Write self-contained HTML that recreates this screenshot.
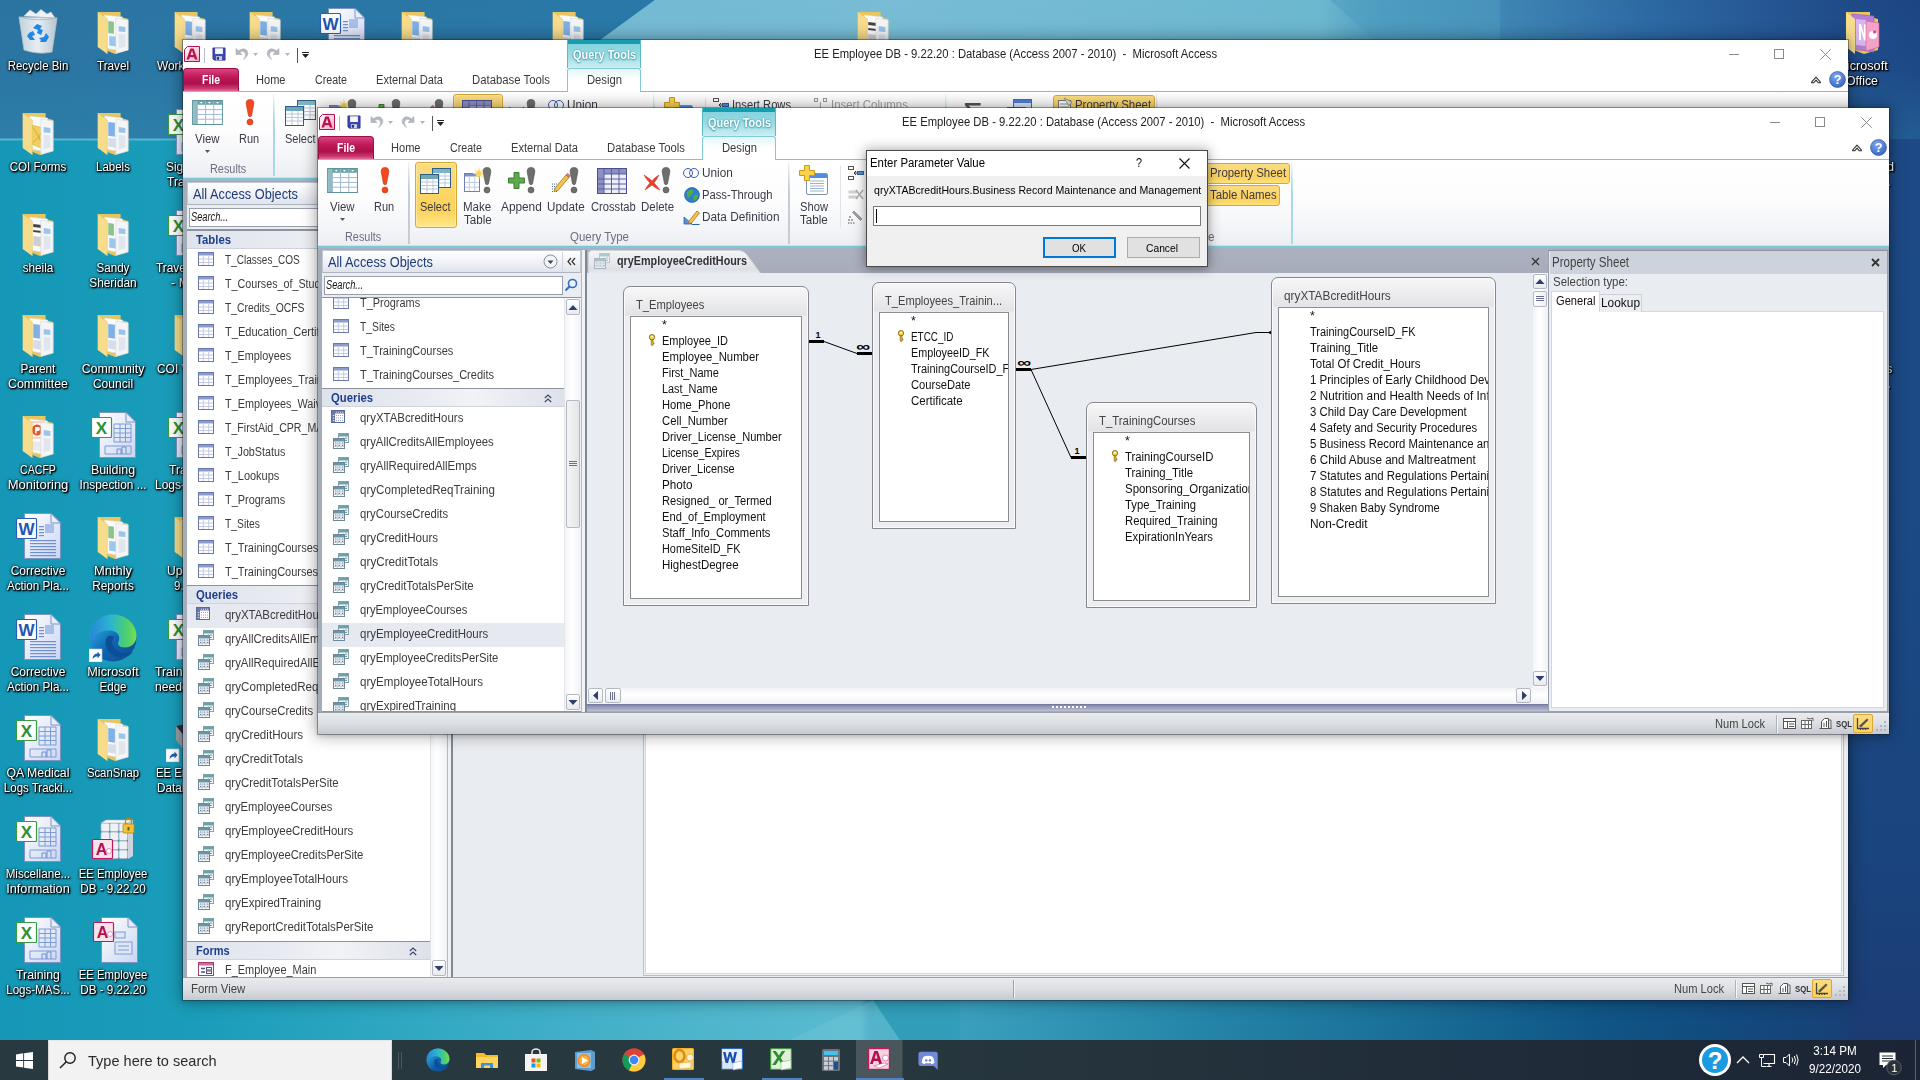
<!DOCTYPE html>
<html lang="en"><head><meta charset="utf-8"><title>Desktop - Microsoft Access</title>
<style>
html,body{margin:0;padding:0;background:#1b8fb0;}
body{width:1920px;height:1080px;overflow:hidden;position:relative;font-family:"Liberation Sans",sans-serif;font-size:12px;line-height:16px;}
#root{position:absolute;left:0;top:0;width:1920px;height:1080px;overflow:hidden;}
#root div,#root svg{position:absolute;box-sizing:border-box;}
.t{white-space:pre;transform-origin:0 0;line-height:16px;}
.t.c{text-align:center;transform-origin:50% 0;}
.clip{overflow:hidden;}
.dl{color:#fff;text-shadow:1px 1px 2px #000,0 0 3px rgba(0,0,0,.95),1px 1px 1px rgba(0,0,0,.9),0 1px 3px rgba(0,0,0,.7);text-align:center;white-space:nowrap;line-height:15px;font-size:12px;transform-origin:50% 0;}
</style></head>
<body><div id="root">
<div id="wall" style="left:0;top:0;width:1920px;height:1040px;background:linear-gradient(to right,#1598b7 0,#1a9dba 200px,#3aacc5 500px,#4db5cc 700px,#5bbbd0 860px,#349fbc 870px,#3a9fbd 960px,#2585a8 1200px,#1a6f98 1400px,#0f5585 1600px,#13487c 1750px,#1c3b72 1920px);"></div><div style="left:0;top:0;width:1920px;height:139px;background:linear-gradient(rgba(50,150,185,0) 0,rgba(50,150,185,.05) 50%,rgba(50,150,185,.28) 100%),linear-gradient(to right,#2b74a2 0,#2a78a7 560px,#2f80ad 600px,#74bad3 655px,#78bcd5 900px,#6cb8cf 1320px,#4f9cc0 1380px,#3f86b4 1500px,#2c68a3 1650px,#1f4a88 1850px,#1c4584 1920px);"></div><div style="left:0;top:138px;width:700px;height:3px;background:linear-gradient(rgba(120,200,225,.2),rgba(120,205,228,.6),rgba(120,200,225,.1));"></div><svg style="left:0;top:0" width="1920" height="1040" viewBox="0 0 1920 1040"><path d="M560 139 L600 40 L655 0 H560 Z" fill="#2a78a7"/><path d="M600 40 L655 0 H700 V40 Z" fill="#74bad3"/><path d="M1330 0 L1375 40 L1420 139 H1500 V0 Z" fill="#4f9cc0" opacity=".55"/><path d="M790 1040 L873 1000 L900 1040 Z" fill="#6cc3d6" opacity=".55"/><path d="M873 1000 L960 1000 L960 1040 L900 1040 Z" fill="#2f9cb8" opacity=".6"/></svg><div style="left:1840px;top:139px;width:80px;height:901px;background:linear-gradient(#1d4a86,#1b4a84 40%,#1a447e 80%,#1c3b72);-webkit-mask-image:linear-gradient(to right,transparent,#000 14px);mask-image:linear-gradient(to right,transparent,#000 14px);"></div><svg style="left:14px;top:8px;" width="48" height="48" viewBox="0 0 48 48"><defs><linearGradient id="rbg" x1="0" y1="0" x2="1" y2="0"><stop offset="0" stop-color="#cfd8df"/><stop offset=".5" stop-color="#f4f7f9"/><stop offset="1" stop-color="#c3ccd4"/></linearGradient></defs><path d="M10 8 L16 2 L22 6 L27 1.500 L33 6 L37 4 L41 10 Z" fill="#eef1f4" stroke="#c7ced5" stroke-width=".6"/><path d="M5 9 L43 10 L38 44 Q24 47 10 42 Z" fill="url(#rbg)" stroke="#b6c0c9" stroke-width=".8" fill-opacity=".93"/><path d="M5 9 Q24 14 43 10" fill="none" stroke="#aab5bf" stroke-width=".8"/><path d="M19 20 l4 -4 l5 2 l-2 3 l3 1 l-2 5 l-4 -2 l1 -3 z M15 25 l4 -2 l2 4 l-3 1 l3 4 h-5 l-3 -4 z M25 30 l5 -1 l2 -4 l3 4 l-3 5 h-6 l1 -2 z" fill="#1e88e5"/></svg>
<div class="dl" style="left:-22px;top:59px;width:120px;transform:scaleX(0.9559);">Recycle Bin</div>
<svg style="left:14px;top:107.5px;" width="48" height="48" viewBox="0 0 48 48"><g transform="translate(1.2,0) scale(.95,1)"><path d="M8 5 H32 V10 L40 12 V43 L26 47 L8 40 Z" fill="#e9c55d"/><path d="M15 8 L34 10 V44 L15 41 Z" fill="#fbfbfb" stroke="#d9d9d9" stroke-width=".6"/><path d="M17 17 l13 3 v21 l-13 -5 z" fill="#f2cf58" stroke="#d8ac30" stroke-width=".6"/><path d="M17 17 l8 12 l5 -9 M25 29 l-8 7 M25 29 l5 12" fill="none" stroke="#c89a20" stroke-width=".7"/><path d="M27 11 L40 13 V43 L27 46.500 Z" fill="#f4f5f7" stroke="#d4d6da" stroke-width=".6"/><path d="M30 19 l7 1 v5 l-7 -.5 z" fill="#9cc3e8"/><path d="M30 27 l7 .6 v12 l-7 1.600 z" fill="#dfe6ee"/><path d="M8 5 L18 12 V47 L8 40 Z" fill="#f7dd8b"/><path d="M8 5 L18 12 V47" fill="none" stroke="#e4c462" stroke-width=".6"/></g></svg>
<div class="dl" style="left:-22px;top:160px;width:120px;transform:scaleX(0.9644);">COI Forms</div>
<svg style="left:14px;top:208.5px;" width="48" height="48" viewBox="0 0 48 48"><g transform="translate(1.2,0) scale(.95,1)"><path d="M8 5 H32 V10 L40 12 V43 L26 47 L8 40 Z" fill="#e9c55d"/><path d="M15 8 L34 10 V44 L15 41 Z" fill="#fbfbfb" stroke="#d9d9d9" stroke-width=".6"/><path d="M19 15 l9 1 v3 l-9 -1 z M19 21 l9 1 v2 l-9 -1 z" fill="#444"/><path d="M19 27 l9 1 v10 l-9 -1.500 z" fill="#cfcfcf"/><path d="M27 11 L40 13 V43 L27 46.500 Z" fill="#f4f5f7" stroke="#d4d6da" stroke-width=".6"/><path d="M30 19 l7 1 v5 l-7 -.5 z" fill="#9cc3e8"/><path d="M30 27 l7 .6 v12 l-7 1.600 z" fill="#dfe6ee"/><path d="M8 5 L18 12 V47 L8 40 Z" fill="#f7dd8b"/><path d="M8 5 L18 12 V47" fill="none" stroke="#e4c462" stroke-width=".6"/></g></svg>
<div class="dl" style="left:-22px;top:261px;width:120px;transform:scaleX(0.9785);">sheila</div>
<svg style="left:14px;top:309.5px;" width="48" height="48" viewBox="0 0 48 48"><g transform="translate(1.2,0) scale(.95,1)"><path d="M8 5 H32 V10 L40 12 V43 L26 47 L8 40 Z" fill="#e9c55d"/><path d="M15 8 L34 10 V44 L15 41 Z" fill="#fbfbfb" stroke="#d9d9d9" stroke-width=".6"/><path d="M19 14 l7 .8 v14 l-7 -1 z" fill="#7fb0e6"/><path d="M19 30 l8 .8 v9 l-8 -1.200 z" fill="#d6dde8"/><path d="M27 11 L40 13 V43 L27 46.500 Z" fill="#f4f5f7" stroke="#d4d6da" stroke-width=".6"/><path d="M30 19 l7 1 v5 l-7 -.5 z" fill="#9cc3e8"/><path d="M30 27 l7 .6 v12 l-7 1.600 z" fill="#dfe6ee"/><path d="M8 5 L18 12 V47 L8 40 Z" fill="#f7dd8b"/><path d="M8 5 L18 12 V47" fill="none" stroke="#e4c462" stroke-width=".6"/></g></svg>
<div class="dl" style="left:-22px;top:362px;width:120px;transform:scaleX(0.9853);">Parent</div><div class="dl" style="left:-22px;top:377px;width:120px;transform:scaleX(1.033);">Committee</div>
<svg style="left:14px;top:410.5px;" width="48" height="48" viewBox="0 0 48 48"><g transform="translate(1.2,0) scale(.95,1)"><path d="M8 5 H32 V10 L40 12 V43 L26 47 L8 40 Z" fill="#e9c55d"/><path d="M15 8 L34 10 V44 L15 41 Z" fill="#fbfbfb" stroke="#d9d9d9" stroke-width=".6"/><rect x="16" y="11" width="15" height="16" fill="#fdf3ee" stroke="#e08a6a" stroke-width=".6"/><circle cx="23" cy="19" r="5.500" fill="#e2572b"/><path d="M21 16 h3 a2 2 0 0 1 0 4 h-1.500 v2.500 h-1.500 z" fill="#fff"/><path d="M17 30 l10 1 v9 l-10 -1.500 z" fill="#e7eaee"/><path d="M27 11 L40 13 V43 L27 46.500 Z" fill="#f4f5f7" stroke="#d4d6da" stroke-width=".6"/><path d="M30 19 l7 1 v5 l-7 -.5 z" fill="#9cc3e8"/><path d="M30 27 l7 .6 v12 l-7 1.600 z" fill="#dfe6ee"/><path d="M8 5 L18 12 V47 L8 40 Z" fill="#f7dd8b"/><path d="M8 5 L18 12 V47" fill="none" stroke="#e4c462" stroke-width=".6"/></g></svg>
<div class="dl" style="left:-22px;top:463px;width:120px;transform:scaleX(0.8821);">CACFP</div><div class="dl" style="left:-22px;top:478px;width:120px;transform:scaleX(1.0837);">Monitoring</div>
<svg style="left:15px;top:512px;" width="48" height="48" viewBox="0 0 48 48"><defs><linearGradient id="dgW" x1="0" y1="0" x2="1" y2="1"><stop offset="0" stop-color="#fff"/><stop offset="1" stop-color="#c9d6f2"/></linearGradient></defs><path d="M9.500 1.500 H36 L45.500 11 V46.500 H9.500 Z" fill="url(#dgW)" stroke="#7d93c4" stroke-width="1"/><path d="M36 1.500 V11 H45.500 Z" fill="#e9effa" stroke="#7d93c4" stroke-width="1"/><rect x="30" y="12" width="9" height="9" fill="#a9bfe8"/><rect x="24" y="14" width="5" height="1.200" fill="#6f8fd0"/><rect x="24" y="17" width="5" height="1.200" fill="#6f8fd0"/><rect x="24" y="20" width="5" height="1.200" fill="#6f8fd0"/><rect x="24" y="23" width="5" height="1.200" fill="#6f8fd0"/><rect x="15" y="28" width="26" height="1.200" fill="#6f8fd0"/><rect x="15" y="31" width="26" height="1.200" fill="#6f8fd0"/><rect x="15" y="34" width="26" height="1.200" fill="#6f8fd0"/><rect x="15" y="37" width="26" height="1.200" fill="#6f8fd0"/><rect x="15" y="40" width="26" height="1.200" fill="#6f8fd0"/><rect x="15" y="43" width="26" height="1.200" fill="#6f8fd0"/><rect x="1.500" y="6.500" width="20" height="20" rx="1" fill="#fff" stroke="#2a5db8" stroke-width="1.200"/><text x="11.500" y="22.500" font-family="Liberation Sans,sans-serif" font-weight="bold" font-size="17" fill="#1f55b3" text-anchor="middle">W</text></svg>
<div class="dl" style="left:-22px;top:564px;width:120px;transform:scaleX(1.0005);">Corrective</div><div class="dl" style="left:-22px;top:579px;width:120px;transform:scaleX(0.9706);">Action Pla...</div>
<svg style="left:15px;top:613px;" width="48" height="48" viewBox="0 0 48 48"><defs><linearGradient id="dgW" x1="0" y1="0" x2="1" y2="1"><stop offset="0" stop-color="#fff"/><stop offset="1" stop-color="#c9d6f2"/></linearGradient></defs><path d="M9.500 1.500 H36 L45.500 11 V46.500 H9.500 Z" fill="url(#dgW)" stroke="#7d93c4" stroke-width="1"/><path d="M36 1.500 V11 H45.500 Z" fill="#e9effa" stroke="#7d93c4" stroke-width="1"/><rect x="30" y="12" width="9" height="9" fill="#a9bfe8"/><rect x="24" y="14" width="5" height="1.200" fill="#6f8fd0"/><rect x="24" y="17" width="5" height="1.200" fill="#6f8fd0"/><rect x="24" y="20" width="5" height="1.200" fill="#6f8fd0"/><rect x="24" y="23" width="5" height="1.200" fill="#6f8fd0"/><rect x="15" y="28" width="26" height="1.200" fill="#6f8fd0"/><rect x="15" y="31" width="26" height="1.200" fill="#6f8fd0"/><rect x="15" y="34" width="26" height="1.200" fill="#6f8fd0"/><rect x="15" y="37" width="26" height="1.200" fill="#6f8fd0"/><rect x="15" y="40" width="26" height="1.200" fill="#6f8fd0"/><rect x="15" y="43" width="26" height="1.200" fill="#6f8fd0"/><rect x="1.500" y="6.500" width="20" height="20" rx="1" fill="#fff" stroke="#2a5db8" stroke-width="1.200"/><text x="11.500" y="22.500" font-family="Liberation Sans,sans-serif" font-weight="bold" font-size="17" fill="#1f55b3" text-anchor="middle">W</text></svg>
<div class="dl" style="left:-22px;top:665px;width:120px;transform:scaleX(1.0005);">Corrective</div><div class="dl" style="left:-22px;top:680px;width:120px;transform:scaleX(0.9706);">Action Pla...</div>
<svg style="left:15px;top:714px;" width="48" height="48" viewBox="0 0 48 48"><defs><linearGradient id="dgX" x1="0" y1="0" x2="1" y2="1"><stop offset="0" stop-color="#fff"/><stop offset="1" stop-color="#c9d6f2"/></linearGradient></defs><path d="M9.500 1.500 H36 L45.500 11 V46.500 H9.500 Z" fill="url(#dgX)" stroke="#7d93c4" stroke-width="1"/><path d="M36 1.500 V11 H45.500 Z" fill="#e9effa" stroke="#7d93c4" stroke-width="1"/><path d="M24 13 H41 V31 H24 Z M24 17.500 H41 M24 22 H41 M24 26.500 H41 M30 13 V31 M35.500 13 V31" fill="none" stroke="#7f9bd4" stroke-width="1"/><path d="M15 35 H41 V43 H15 Z" fill="none" stroke="#7f9bd4" stroke-width="1"/><path d="M27 43 V38 H31 V43 M32 43 V36 H36 V43" fill="none" stroke="#6f8fd0" stroke-width="1"/><rect x="1.500" y="6.500" width="20" height="20" rx="1" fill="#fff" stroke="#3a9a3e" stroke-width="1.200"/><text x="11.500" y="22.500" font-family="Liberation Sans,sans-serif" font-weight="bold" font-size="17" fill="#2f8f33" text-anchor="middle">X</text></svg>
<div class="dl" style="left:-22px;top:766px;width:120px;transform:scaleX(1.0248);">QA Medical</div><div class="dl" style="left:-22px;top:781px;width:120px;transform:scaleX(0.9565);">Logs Tracki...</div>
<svg style="left:15px;top:815px;" width="48" height="48" viewBox="0 0 48 48"><defs><linearGradient id="dgX" x1="0" y1="0" x2="1" y2="1"><stop offset="0" stop-color="#fff"/><stop offset="1" stop-color="#c9d6f2"/></linearGradient></defs><path d="M9.500 1.500 H36 L45.500 11 V46.500 H9.500 Z" fill="url(#dgX)" stroke="#7d93c4" stroke-width="1"/><path d="M36 1.500 V11 H45.500 Z" fill="#e9effa" stroke="#7d93c4" stroke-width="1"/><path d="M24 13 H41 V31 H24 Z M24 17.500 H41 M24 22 H41 M24 26.500 H41 M30 13 V31 M35.500 13 V31" fill="none" stroke="#7f9bd4" stroke-width="1"/><path d="M15 35 H41 V43 H15 Z" fill="none" stroke="#7f9bd4" stroke-width="1"/><path d="M27 43 V38 H31 V43 M32 43 V36 H36 V43" fill="none" stroke="#6f8fd0" stroke-width="1"/><rect x="1.500" y="6.500" width="20" height="20" rx="1" fill="#fff" stroke="#3a9a3e" stroke-width="1.200"/><text x="11.500" y="22.500" font-family="Liberation Sans,sans-serif" font-weight="bold" font-size="17" fill="#2f8f33" text-anchor="middle">X</text></svg>
<div class="dl" style="left:-22px;top:867px;width:120px;transform:scaleX(0.9696);">Miscellane...</div><div class="dl" style="left:-22px;top:882px;width:120px;transform:scaleX(1.0571);">Information</div>
<svg style="left:15px;top:916px;" width="48" height="48" viewBox="0 0 48 48"><defs><linearGradient id="dgX" x1="0" y1="0" x2="1" y2="1"><stop offset="0" stop-color="#fff"/><stop offset="1" stop-color="#c9d6f2"/></linearGradient></defs><path d="M9.500 1.500 H36 L45.500 11 V46.500 H9.500 Z" fill="url(#dgX)" stroke="#7d93c4" stroke-width="1"/><path d="M36 1.500 V11 H45.500 Z" fill="#e9effa" stroke="#7d93c4" stroke-width="1"/><path d="M24 13 H41 V31 H24 Z M24 17.500 H41 M24 22 H41 M24 26.500 H41 M30 13 V31 M35.500 13 V31" fill="none" stroke="#7f9bd4" stroke-width="1"/><path d="M15 35 H41 V43 H15 Z" fill="none" stroke="#7f9bd4" stroke-width="1"/><path d="M27 43 V38 H31 V43 M32 43 V36 H36 V43" fill="none" stroke="#6f8fd0" stroke-width="1"/><rect x="1.500" y="6.500" width="20" height="20" rx="1" fill="#fff" stroke="#3a9a3e" stroke-width="1.200"/><text x="11.500" y="22.500" font-family="Liberation Sans,sans-serif" font-weight="bold" font-size="17" fill="#2f8f33" text-anchor="middle">X</text></svg>
<div class="dl" style="left:-22px;top:968px;width:120px;transform:scaleX(1.0223);">Training</div><div class="dl" style="left:-22px;top:983px;width:120px;transform:scaleX(0.963);">Logs-MAS...</div>
<svg style="left:89px;top:6.5px;" width="48" height="48" viewBox="0 0 48 48"><g transform="translate(1.2,0) scale(.95,1)"><path d="M8 5 H32 V10 L40 12 V43 L26 47 L8 40 Z" fill="#e9c55d"/><path d="M15 8 L34 10 V44 L15 41 Z" fill="#fbfbfb" stroke="#d9d9d9" stroke-width=".6"/><path d="M19 14 l6 .7 v12 l-6 -.6 z" fill="#8cc38a"/><path d="M20 29 l8 .8 v10 l-8 -1.200 z" fill="#9dc7ea"/><path d="M27 11 L40 13 V43 L27 46.500 Z" fill="#f4f5f7" stroke="#d4d6da" stroke-width=".6"/><path d="M30 19 l7 1 v5 l-7 -.5 z" fill="#9cc3e8"/><path d="M30 27 l7 .6 v12 l-7 1.600 z" fill="#dfe6ee"/><path d="M8 5 L18 12 V47 L8 40 Z" fill="#f7dd8b"/><path d="M8 5 L18 12 V47" fill="none" stroke="#e4c462" stroke-width=".6"/></g></svg>
<div class="dl" style="left:53px;top:59px;width:120px;transform:scaleX(0.9766);">Travel</div>
<svg style="left:89px;top:107.5px;" width="48" height="48" viewBox="0 0 48 48"><g transform="translate(1.2,0) scale(.95,1)"><path d="M8 5 H32 V10 L40 12 V43 L26 47 L8 40 Z" fill="#e9c55d"/><path d="M15 8 L34 10 V44 L15 41 Z" fill="#fbfbfb" stroke="#d9d9d9" stroke-width=".6"/><path d="M19 14 l7 .8 v14 l-7 -1 z" fill="#7fb0e6"/><path d="M19 30 l8 .8 v9 l-8 -1.200 z" fill="#d6dde8"/><path d="M27 11 L40 13 V43 L27 46.500 Z" fill="#f4f5f7" stroke="#d4d6da" stroke-width=".6"/><path d="M30 19 l7 1 v5 l-7 -.5 z" fill="#9cc3e8"/><path d="M30 27 l7 .6 v12 l-7 1.600 z" fill="#dfe6ee"/><path d="M8 5 L18 12 V47 L8 40 Z" fill="#f7dd8b"/><path d="M8 5 L18 12 V47" fill="none" stroke="#e4c462" stroke-width=".6"/></g></svg>
<div class="dl" style="left:53px;top:160px;width:120px;transform:scaleX(0.9545);">Labels</div>
<svg style="left:89px;top:208.5px;" width="48" height="48" viewBox="0 0 48 48"><g transform="translate(1.2,0) scale(.95,1)"><path d="M8 5 H32 V10 L40 12 V43 L26 47 L8 40 Z" fill="#e9c55d"/><path d="M15 8 L34 10 V44 L15 41 Z" fill="#fbfbfb" stroke="#d9d9d9" stroke-width=".6"/><path d="M19 14 l6 .7 v12 l-6 -.6 z" fill="#8cc38a"/><path d="M20 29 l8 .8 v10 l-8 -1.200 z" fill="#9dc7ea"/><path d="M27 11 L40 13 V43 L27 46.500 Z" fill="#f4f5f7" stroke="#d4d6da" stroke-width=".6"/><path d="M30 19 l7 1 v5 l-7 -.5 z" fill="#9cc3e8"/><path d="M30 27 l7 .6 v12 l-7 1.600 z" fill="#dfe6ee"/><path d="M8 5 L18 12 V47 L8 40 Z" fill="#f7dd8b"/><path d="M8 5 L18 12 V47" fill="none" stroke="#e4c462" stroke-width=".6"/></g></svg>
<div class="dl" style="left:53px;top:261px;width:120px;transform:scaleX(0.9627);">Sandy</div><div class="dl" style="left:53px;top:276px;width:120px;transform:scaleX(0.987);">Sheridan</div>
<svg style="left:89px;top:309.5px;" width="48" height="48" viewBox="0 0 48 48"><g transform="translate(1.2,0) scale(.95,1)"><path d="M8 5 H32 V10 L40 12 V43 L26 47 L8 40 Z" fill="#e9c55d"/><path d="M15 8 L34 10 V44 L15 41 Z" fill="#fbfbfb" stroke="#d9d9d9" stroke-width=".6"/><path d="M19 14 l7 .8 v14 l-7 -1 z" fill="#7fb0e6"/><path d="M19 30 l8 .8 v9 l-8 -1.200 z" fill="#d6dde8"/><path d="M27 11 L40 13 V43 L27 46.500 Z" fill="#f4f5f7" stroke="#d4d6da" stroke-width=".6"/><path d="M30 19 l7 1 v5 l-7 -.5 z" fill="#9cc3e8"/><path d="M30 27 l7 .6 v12 l-7 1.600 z" fill="#dfe6ee"/><path d="M8 5 L18 12 V47 L8 40 Z" fill="#f7dd8b"/><path d="M8 5 L18 12 V47" fill="none" stroke="#e4c462" stroke-width=".6"/></g></svg>
<div class="dl" style="left:53px;top:362px;width:120px;transform:scaleX(1.0336);">Community</div><div class="dl" style="left:53px;top:377px;width:120px;transform:scaleX(1.0039);">Council</div>
<svg style="left:90px;top:411px;" width="48" height="48" viewBox="0 0 48 48"><defs><linearGradient id="dgX" x1="0" y1="0" x2="1" y2="1"><stop offset="0" stop-color="#fff"/><stop offset="1" stop-color="#c9d6f2"/></linearGradient></defs><path d="M9.500 1.500 H36 L45.500 11 V46.500 H9.500 Z" fill="url(#dgX)" stroke="#7d93c4" stroke-width="1"/><path d="M36 1.500 V11 H45.500 Z" fill="#e9effa" stroke="#7d93c4" stroke-width="1"/><path d="M24 13 H41 V31 H24 Z M24 17.500 H41 M24 22 H41 M24 26.500 H41 M30 13 V31 M35.500 13 V31" fill="none" stroke="#7f9bd4" stroke-width="1"/><path d="M15 35 H41 V43 H15 Z" fill="none" stroke="#7f9bd4" stroke-width="1"/><path d="M27 43 V38 H31 V43 M32 43 V36 H36 V43" fill="none" stroke="#6f8fd0" stroke-width="1"/><rect x="1.500" y="6.500" width="20" height="20" rx="1" fill="#fff" stroke="#3a9a3e" stroke-width="1.200"/><text x="11.500" y="22.500" font-family="Liberation Sans,sans-serif" font-weight="bold" font-size="17" fill="#2f8f33" text-anchor="middle">X</text></svg>
<div class="dl" style="left:53px;top:463px;width:120px;transform:scaleX(1.034);">Building</div><div class="dl" style="left:53px;top:478px;width:120px;transform:scaleX(0.9876);">Inspection ...</div>
<svg style="left:89px;top:511.5px;" width="48" height="48" viewBox="0 0 48 48"><g transform="translate(1.2,0) scale(.95,1)"><path d="M8 5 H32 V10 L40 12 V43 L26 47 L8 40 Z" fill="#e9c55d"/><path d="M15 8 L34 10 V44 L15 41 Z" fill="#fbfbfb" stroke="#d9d9d9" stroke-width=".6"/><path d="M19 14 l6 .7 v12 l-6 -.6 z" fill="#8cc38a"/><path d="M20 29 l8 .8 v10 l-8 -1.200 z" fill="#9dc7ea"/><path d="M27 11 L40 13 V43 L27 46.500 Z" fill="#f4f5f7" stroke="#d4d6da" stroke-width=".6"/><path d="M30 19 l7 1 v5 l-7 -.5 z" fill="#9cc3e8"/><path d="M30 27 l7 .6 v12 l-7 1.600 z" fill="#dfe6ee"/><path d="M8 5 L18 12 V47 L8 40 Z" fill="#f7dd8b"/><path d="M8 5 L18 12 V47" fill="none" stroke="#e4c462" stroke-width=".6"/></g></svg>
<div class="dl" style="left:53px;top:564px;width:120px;transform:scaleX(1.0711);">Mnthly</div><div class="dl" style="left:53px;top:579px;width:120px;transform:scaleX(0.9925);">Reports</div>
<svg style="left:89px;top:614px;" width="48" height="48" viewBox="0 0 48 48"><defs><linearGradient id="Eg1" x1="0" y1="0" x2="1" y2="1"><stop offset="0" stop-color="#35c1f1"/><stop offset=".55" stop-color="#0f63b0"/><stop offset="1" stop-color="#114a8b"/></linearGradient><linearGradient id="Eg2" x1="0" y1="0" x2="1" y2="0"><stop offset="0" stop-color="#2a86dc"/><stop offset=".45" stop-color="#2cb5cf"/><stop offset=".8" stop-color="#4fd06a"/><stop offset="1" stop-color="#7bdc55"/></linearGradient></defs><circle cx="24" cy="24" r="23.500" fill="url(#Eg1)"/><path d="M1.500 20 C3 8 13 .5 24 .5 C37 .5 47.500 10 47.500 22 C47.500 29 42 33.500 36 33.500 C30 33.500 28.500 30.500 29.200 28.500 C31 25 31 19 24 17 C14 15 5 20 1.500 28 Z" fill="url(#Eg2)"/><path d="M18 23 C14 30 18 41 30 43.500 C36 44.500 41 41.500 44 37.500 C38 40.500 28 39.500 24.500 32.500 C22.500 29 23 25.500 25.200 23.200 C23 21.200 20 21.400 18 23 Z" fill="#0b4f96"/><rect x="0" y="35" width="13" height="13" fill="#fff" stroke="#b8c4d0" stroke-width=".6"/><path d="M3.500 45 Q4 39.500 8.500 39.500 V37.500 L11.500 41 L8.500 44.500 V42.300 Q5.500 42.300 3.500 45 Z" fill="#1a5fb4"/></svg>
<div class="dl" style="left:53px;top:665px;width:120px;transform:scaleX(1.0558);">Microsoft</div><div class="dl" style="left:53px;top:680px;width:120px;transform:scaleX(0.9634);">Edge</div>
<svg style="left:89px;top:713.5px;" width="48" height="48" viewBox="0 0 48 48"><g transform="translate(1.2,0) scale(.95,1)"><path d="M8 5 H32 V10 L40 12 V43 L26 47 L8 40 Z" fill="#e9c55d"/><path d="M15 8 L34 10 V44 L15 41 Z" fill="#fbfbfb" stroke="#d9d9d9" stroke-width=".6"/><path d="M19 14 l7 .8 v14 l-7 -1 z" fill="#7fb0e6"/><path d="M19 30 l8 .8 v9 l-8 -1.200 z" fill="#d6dde8"/><path d="M27 11 L40 13 V43 L27 46.500 Z" fill="#f4f5f7" stroke="#d4d6da" stroke-width=".6"/><path d="M30 19 l7 1 v5 l-7 -.5 z" fill="#9cc3e8"/><path d="M30 27 l7 .6 v12 l-7 1.600 z" fill="#dfe6ee"/><path d="M8 5 L18 12 V47 L8 40 Z" fill="#f7dd8b"/><path d="M8 5 L18 12 V47" fill="none" stroke="#e4c462" stroke-width=".6"/></g></svg>
<div class="dl" style="left:53px;top:766px;width:120px;transform:scaleX(0.9421);">ScanSnap</div>
<svg style="left:89px;top:814.5px;" width="48" height="48" viewBox="0 0 48 48"><rect x="12" y="8" width="8.500" height="8.500" rx="1.500" fill="#eef1f6" stroke="#aab2c0" stroke-width=".8"/><rect x="21" y="8" width="8.500" height="8.500" rx="1.500" fill="#eef1f6" stroke="#aab2c0" stroke-width=".8"/><rect x="30" y="8" width="8.500" height="8.500" rx="1.500" fill="#eef1f6" stroke="#aab2c0" stroke-width=".8"/><rect x="12" y="17" width="8.500" height="8.500" rx="1.500" fill="#eef1f6" stroke="#aab2c0" stroke-width=".8"/><rect x="21" y="17" width="8.500" height="8.500" rx="1.500" fill="#eef1f6" stroke="#aab2c0" stroke-width=".8"/><rect x="30" y="17" width="8.500" height="8.500" rx="1.500" fill="#eef1f6" stroke="#aab2c0" stroke-width=".8"/><rect x="12" y="26" width="8.500" height="8.500" rx="1.500" fill="#eef1f6" stroke="#aab2c0" stroke-width=".8"/><rect x="21" y="26" width="8.500" height="8.500" rx="1.500" fill="#eef1f6" stroke="#aab2c0" stroke-width=".8"/><rect x="30" y="26" width="8.500" height="8.500" rx="1.500" fill="#eef1f6" stroke="#aab2c0" stroke-width=".8"/><rect x="12" y="35" width="8.500" height="8.500" rx="1.500" fill="#eef1f6" stroke="#aab2c0" stroke-width=".8"/><rect x="21" y="35" width="8.500" height="8.500" rx="1.500" fill="#eef1f6" stroke="#aab2c0" stroke-width=".8"/><rect x="30" y="35" width="8.500" height="8.500" rx="1.500" fill="#eef1f6" stroke="#aab2c0" stroke-width=".8"/><path d="M39 8 l5 -3 v36 l-5 3 z" fill="#cdd3de"/><path d="M12 8 l5 -3 h27 l-5 3 z" fill="#f8f9fb" stroke="#aab2c0" stroke-width=".6"/><rect x="34" y="9" width="11" height="9" rx="1" fill="#f3c23c" stroke="#b98a12" stroke-width=".8"/><path d="M36.500 9 v-2.500 a3 3 0 0 1 6 0 v2.500" fill="none" stroke="#b98a12" stroke-width="1.300"/><rect x="38.500" y="12" width="2" height="3.500" fill="#7a5a08"/><rect x="3.500" y="24.500" width="20" height="19" rx="1" fill="#fbe3ee" stroke="#c2185b" stroke-width="1.200"/><text x="12.500" y="39.500" font-family="Liberation Sans,sans-serif" font-weight="bold" font-size="16" fill="#b0104e" text-anchor="middle">A</text><circle cx="20" cy="36" r="2.500" fill="#fff" stroke="#d05a8a" stroke-width=".6"/></svg>
<div class="dl" style="left:53px;top:867px;width:120px;transform:scaleX(0.9428);">EE Employee</div><div class="dl" style="left:53px;top:882px;width:120px;transform:scaleX(0.9726);">DB - 9.22.20</div>
<svg style="left:92px;top:916px;" width="48" height="48" viewBox="0 0 48 48"><defs><linearGradient id="dgA" x1="0" y1="0" x2="1" y2="1"><stop offset="0" stop-color="#fff"/><stop offset="1" stop-color="#c9d6f2"/></linearGradient></defs><path d="M9.500 1.500 H36 L45.500 11 V46.500 H9.500 Z" fill="url(#dgA)" stroke="#7d93c4" stroke-width="1"/><path d="M36 1.500 V11 H45.500 Z" fill="#e9effa" stroke="#7d93c4" stroke-width="1"/><rect x="23" y="16" width="10" height="6" fill="#dfe7f7" stroke="#7f9bd4"/><rect x="23" y="26" width="17" height="12" fill="#dfe7f7" stroke="#7f9bd4"/><path d="M26 30 H37 M26 34 H37" stroke="#7f9bd4"/><rect x="1.500" y="6.500" width="20" height="19" rx="1" fill="#fbe3ee" stroke="#c2185b" stroke-width="1.200"/><text x="10.500" y="21.500" font-family="Liberation Sans,sans-serif" font-weight="bold" font-size="16" fill="#b0104e" text-anchor="middle">A</text><circle cx="18" cy="18" r="2.500" fill="#fff" stroke="#d05a8a" stroke-width=".6"/></svg>
<div class="dl" style="left:53px;top:968px;width:120px;transform:scaleX(0.9428);">EE Employee</div><div class="dl" style="left:53px;top:983px;width:120px;transform:scaleX(0.9726);">DB - 9.22.20</div>
<svg style="left:166px;top:6.5px;" width="48" height="48" viewBox="0 0 48 48"><g transform="translate(1.2,0) scale(.95,1)"><path d="M8 5 H32 V10 L40 12 V43 L26 47 L8 40 Z" fill="#e9c55d"/><path d="M15 8 L34 10 V44 L15 41 Z" fill="#fbfbfb" stroke="#d9d9d9" stroke-width=".6"/><path d="M19 14 l7 .8 v14 l-7 -1 z" fill="#7fb0e6"/><path d="M19 30 l8 .8 v9 l-8 -1.200 z" fill="#d6dde8"/><path d="M27 11 L40 13 V43 L27 46.500 Z" fill="#f4f5f7" stroke="#d4d6da" stroke-width=".6"/><path d="M30 19 l7 1 v5 l-7 -.5 z" fill="#9cc3e8"/><path d="M30 27 l7 .6 v12 l-7 1.600 z" fill="#dfe6ee"/><path d="M8 5 L18 12 V47 L8 40 Z" fill="#f7dd8b"/><path d="M8 5 L18 12 V47" fill="none" stroke="#e4c462" stroke-width=".6"/></g></svg>
<div class="dl" style="left:157px;top:59px;text-align:left;transform-origin:0 0;transform:scaleX(0.9895);">Work Files</div>
<svg style="left:167px;top:108px;" width="48" height="48" viewBox="0 0 48 48"><defs><linearGradient id="dgX" x1="0" y1="0" x2="1" y2="1"><stop offset="0" stop-color="#fff"/><stop offset="1" stop-color="#c9d6f2"/></linearGradient></defs><path d="M9.500 1.500 H36 L45.500 11 V46.500 H9.500 Z" fill="url(#dgX)" stroke="#7d93c4" stroke-width="1"/><path d="M36 1.500 V11 H45.500 Z" fill="#e9effa" stroke="#7d93c4" stroke-width="1"/><path d="M24 13 H41 V31 H24 Z M24 17.500 H41 M24 22 H41 M24 26.500 H41 M30 13 V31 M35.500 13 V31" fill="none" stroke="#7f9bd4" stroke-width="1"/><path d="M15 35 H41 V43 H15 Z" fill="none" stroke="#7f9bd4" stroke-width="1"/><path d="M27 43 V38 H31 V43 M32 43 V36 H36 V43" fill="none" stroke="#6f8fd0" stroke-width="1"/><rect x="1.500" y="6.500" width="20" height="20" rx="1" fill="#fff" stroke="#3a9a3e" stroke-width="1.200"/><text x="11.500" y="22.500" font-family="Liberation Sans,sans-serif" font-weight="bold" font-size="17" fill="#2f8f33" text-anchor="middle">X</text></svg>
<div class="dl" style="left:166px;top:160px;text-align:left;transform-origin:0 0;transform:scaleX(0.994);">Sign In</div><div class="dl" style="left:167px;top:175px;text-align:left;transform-origin:0 0;transform:scaleX(1.0033);">Tracking</div>
<svg style="left:167px;top:209px;" width="48" height="48" viewBox="0 0 48 48"><defs><linearGradient id="dgX" x1="0" y1="0" x2="1" y2="1"><stop offset="0" stop-color="#fff"/><stop offset="1" stop-color="#c9d6f2"/></linearGradient></defs><path d="M9.500 1.500 H36 L45.500 11 V46.500 H9.500 Z" fill="url(#dgX)" stroke="#7d93c4" stroke-width="1"/><path d="M36 1.500 V11 H45.500 Z" fill="#e9effa" stroke="#7d93c4" stroke-width="1"/><path d="M24 13 H41 V31 H24 Z M24 17.500 H41 M24 22 H41 M24 26.500 H41 M30 13 V31 M35.500 13 V31" fill="none" stroke="#7f9bd4" stroke-width="1"/><path d="M15 35 H41 V43 H15 Z" fill="none" stroke="#7f9bd4" stroke-width="1"/><path d="M27 43 V38 H31 V43 M32 43 V36 H36 V43" fill="none" stroke="#6f8fd0" stroke-width="1"/><rect x="1.500" y="6.500" width="20" height="20" rx="1" fill="#fff" stroke="#3a9a3e" stroke-width="1.200"/><text x="11.500" y="22.500" font-family="Liberation Sans,sans-serif" font-weight="bold" font-size="17" fill="#2f8f33" text-anchor="middle">X</text></svg>
<div class="dl" style="left:156px;top:261px;text-align:left;transform-origin:0 0;transform:scaleX(0.9888);">Travel Log</div><div class="dl" style="left:171px;top:276px;text-align:left;transform-origin:0 0;transform:scaleX(1.0414);">- Mileage</div>
<svg style="left:166px;top:309.5px;" width="48" height="48" viewBox="0 0 48 48"><g transform="translate(1.2,0) scale(.95,1)"><path d="M8 5 H32 V10 L40 12 V43 L26 47 L8 40 Z" fill="#e9c55d"/><path d="M15 8 L34 10 V44 L15 41 Z" fill="#fbfbfb" stroke="#d9d9d9" stroke-width=".6"/><path d="M19 14 l7 .8 v14 l-7 -1 z" fill="#7fb0e6"/><path d="M19 30 l8 .8 v9 l-8 -1.200 z" fill="#d6dde8"/><path d="M27 11 L40 13 V43 L27 46.500 Z" fill="#f4f5f7" stroke="#d4d6da" stroke-width=".6"/><path d="M30 19 l7 1 v5 l-7 -.5 z" fill="#9cc3e8"/><path d="M30 27 l7 .6 v12 l-7 1.600 z" fill="#dfe6ee"/><path d="M8 5 L18 12 V47 L8 40 Z" fill="#f7dd8b"/><path d="M8 5 L18 12 V47" fill="none" stroke="#e4c462" stroke-width=".6"/></g></svg>
<div class="dl" style="left:157px;top:362px;text-align:left;transform-origin:0 0;transform:scaleX(0.9931);">COI Vendors</div>
<svg style="left:167px;top:411px;" width="48" height="48" viewBox="0 0 48 48"><defs><linearGradient id="dgX" x1="0" y1="0" x2="1" y2="1"><stop offset="0" stop-color="#fff"/><stop offset="1" stop-color="#c9d6f2"/></linearGradient></defs><path d="M9.500 1.500 H36 L45.500 11 V46.500 H9.500 Z" fill="url(#dgX)" stroke="#7d93c4" stroke-width="1"/><path d="M36 1.500 V11 H45.500 Z" fill="#e9effa" stroke="#7d93c4" stroke-width="1"/><path d="M24 13 H41 V31 H24 Z M24 17.500 H41 M24 22 H41 M24 26.500 H41 M30 13 V31 M35.500 13 V31" fill="none" stroke="#7f9bd4" stroke-width="1"/><path d="M15 35 H41 V43 H15 Z" fill="none" stroke="#7f9bd4" stroke-width="1"/><path d="M27 43 V38 H31 V43 M32 43 V36 H36 V43" fill="none" stroke="#6f8fd0" stroke-width="1"/><rect x="1.500" y="6.500" width="20" height="20" rx="1" fill="#fff" stroke="#3a9a3e" stroke-width="1.200"/><text x="11.500" y="22.500" font-family="Liberation Sans,sans-serif" font-weight="bold" font-size="17" fill="#2f8f33" text-anchor="middle">X</text></svg>
<div class="dl" style="left:169px;top:463px;text-align:left;transform-origin:0 0;transform:scaleX(1.0223);">Training</div><div class="dl" style="left:155px;top:478px;text-align:left;transform-origin:0 0;transform:scaleX(0.9984);">Logs-2020</div>
<svg style="left:166px;top:511.5px;" width="48" height="48" viewBox="0 0 48 48"><g transform="translate(1.2,0) scale(.95,1)"><path d="M8 5 H32 V10 L40 12 V43 L26 47 L8 40 Z" fill="#e9c55d"/><path d="M15 8 L34 10 V44 L15 41 Z" fill="#fbfbfb" stroke="#d9d9d9" stroke-width=".6"/><path d="M19 14 l6 .7 v12 l-6 -.6 z" fill="#8cc38a"/><path d="M20 29 l8 .8 v10 l-8 -1.200 z" fill="#9dc7ea"/><path d="M27 11 L40 13 V43 L27 46.500 Z" fill="#f4f5f7" stroke="#d4d6da" stroke-width=".6"/><path d="M30 19 l7 1 v5 l-7 -.5 z" fill="#9cc3e8"/><path d="M30 27 l7 .6 v12 l-7 1.600 z" fill="#dfe6ee"/><path d="M8 5 L18 12 V47 L8 40 Z" fill="#f7dd8b"/><path d="M8 5 L18 12 V47" fill="none" stroke="#e4c462" stroke-width=".6"/></g></svg>
<div class="dl" style="left:167px;top:564px;text-align:left;transform-origin:0 0;transform:scaleX(1.002);">Updates</div><div class="dl" style="left:174px;top:579px;text-align:left;transform-origin:0 0;transform:scaleX(0.9616);">9.20</div>
<svg style="left:167px;top:613px;" width="48" height="48" viewBox="0 0 48 48"><defs><linearGradient id="dgX" x1="0" y1="0" x2="1" y2="1"><stop offset="0" stop-color="#fff"/><stop offset="1" stop-color="#c9d6f2"/></linearGradient></defs><path d="M9.500 1.500 H36 L45.500 11 V46.500 H9.500 Z" fill="url(#dgX)" stroke="#7d93c4" stroke-width="1"/><path d="M36 1.500 V11 H45.500 Z" fill="#e9effa" stroke="#7d93c4" stroke-width="1"/><path d="M24 13 H41 V31 H24 Z M24 17.500 H41 M24 22 H41 M24 26.500 H41 M30 13 V31 M35.500 13 V31" fill="none" stroke="#7f9bd4" stroke-width="1"/><path d="M15 35 H41 V43 H15 Z" fill="none" stroke="#7f9bd4" stroke-width="1"/><path d="M27 43 V38 H31 V43 M32 43 V36 H36 V43" fill="none" stroke="#6f8fd0" stroke-width="1"/><rect x="1.500" y="6.500" width="20" height="20" rx="1" fill="#fff" stroke="#3a9a3e" stroke-width="1.200"/><text x="11.500" y="22.500" font-family="Liberation Sans,sans-serif" font-weight="bold" font-size="17" fill="#2f8f33" text-anchor="middle">X</text></svg>
<div class="dl" style="left:155px;top:665px;text-align:left;transform-origin:0 0;transform:scaleX(1.0223);">Training</div><div class="dl" style="left:155px;top:680px;text-align:left;transform-origin:0 0;transform:scaleX(1.0127);">needed</div>
<svg style="left:166px;top:713.5px;" width="48" height="48" viewBox="0 0 48 48"><path d="M10 12 L40 6 L46 14 L18 22 Z" fill="#2b2f33"/><path d="M18 22 L46 14 V26 L18 36 Z" fill="#d8dcdf"/><path d="M10 12 L18 22 V36 L10 26 Z" fill="#9aa1a8"/><path d="M22 26 L44 19" stroke="#4caf50" stroke-width="2"/><rect x="0" y="35" width="13" height="13" fill="#fff" stroke="#b8c4d0" stroke-width=".6"/><path d="M3.500 45 Q4 39.500 8.500 39.500 V37.500 L11.500 41 L8.500 44.500 V42.300 Q5.500 42.300 3.500 45 Z" fill="#1a5fb4"/></svg>
<div class="dl" style="left:156px;top:766px;text-align:left;transform-origin:0 0;transform:scaleX(0.9428);">EE Employee</div><div class="dl" style="left:157px;top:781px;text-align:left;transform-origin:0 0;transform:scaleX(0.9776);">Database</div>
<svg style="left:241px;top:6.5px;" width="48" height="48" viewBox="0 0 48 48"><g transform="translate(1.2,0) scale(.95,1)"><path d="M8 5 H32 V10 L40 12 V43 L26 47 L8 40 Z" fill="#e9c55d"/><path d="M15 8 L34 10 V44 L15 41 Z" fill="#fbfbfb" stroke="#d9d9d9" stroke-width=".6"/><path d="M19 14 l7 .8 v14 l-7 -1 z" fill="#7fb0e6"/><path d="M19 30 l8 .8 v9 l-8 -1.200 z" fill="#d6dde8"/><path d="M27 11 L40 13 V43 L27 46.500 Z" fill="#f4f5f7" stroke="#d4d6da" stroke-width=".6"/><path d="M30 19 l7 1 v5 l-7 -.5 z" fill="#9cc3e8"/><path d="M30 27 l7 .6 v12 l-7 1.600 z" fill="#dfe6ee"/><path d="M8 5 L18 12 V47 L8 40 Z" fill="#f7dd8b"/><path d="M8 5 L18 12 V47" fill="none" stroke="#e4c462" stroke-width=".6"/></g></svg>
<svg style="left:319px;top:7px;" width="48" height="48" viewBox="0 0 48 48"><defs><linearGradient id="dgW" x1="0" y1="0" x2="1" y2="1"><stop offset="0" stop-color="#fff"/><stop offset="1" stop-color="#c9d6f2"/></linearGradient></defs><path d="M9.500 1.500 H36 L45.500 11 V46.500 H9.500 Z" fill="url(#dgW)" stroke="#7d93c4" stroke-width="1"/><path d="M36 1.500 V11 H45.500 Z" fill="#e9effa" stroke="#7d93c4" stroke-width="1"/><rect x="30" y="12" width="9" height="9" fill="#a9bfe8"/><rect x="24" y="14" width="5" height="1.200" fill="#6f8fd0"/><rect x="24" y="17" width="5" height="1.200" fill="#6f8fd0"/><rect x="24" y="20" width="5" height="1.200" fill="#6f8fd0"/><rect x="24" y="23" width="5" height="1.200" fill="#6f8fd0"/><rect x="15" y="28" width="26" height="1.200" fill="#6f8fd0"/><rect x="15" y="31" width="26" height="1.200" fill="#6f8fd0"/><rect x="15" y="34" width="26" height="1.200" fill="#6f8fd0"/><rect x="15" y="37" width="26" height="1.200" fill="#6f8fd0"/><rect x="15" y="40" width="26" height="1.200" fill="#6f8fd0"/><rect x="15" y="43" width="26" height="1.200" fill="#6f8fd0"/><rect x="1.500" y="6.500" width="20" height="20" rx="1" fill="#fff" stroke="#2a5db8" stroke-width="1.200"/><text x="11.500" y="22.500" font-family="Liberation Sans,sans-serif" font-weight="bold" font-size="17" fill="#1f55b3" text-anchor="middle">W</text></svg>
<svg style="left:393px;top:6.5px;" width="48" height="48" viewBox="0 0 48 48"><g transform="translate(1.2,0) scale(.95,1)"><path d="M8 5 H32 V10 L40 12 V43 L26 47 L8 40 Z" fill="#e9c55d"/><path d="M15 8 L34 10 V44 L15 41 Z" fill="#fbfbfb" stroke="#d9d9d9" stroke-width=".6"/><path d="M19 14 l7 .8 v14 l-7 -1 z" fill="#7fb0e6"/><path d="M19 30 l8 .8 v9 l-8 -1.200 z" fill="#d6dde8"/><path d="M27 11 L40 13 V43 L27 46.500 Z" fill="#f4f5f7" stroke="#d4d6da" stroke-width=".6"/><path d="M30 19 l7 1 v5 l-7 -.5 z" fill="#9cc3e8"/><path d="M30 27 l7 .6 v12 l-7 1.600 z" fill="#dfe6ee"/><path d="M8 5 L18 12 V47 L8 40 Z" fill="#f7dd8b"/><path d="M8 5 L18 12 V47" fill="none" stroke="#e4c462" stroke-width=".6"/></g></svg>
<svg style="left:544px;top:6.5px;" width="48" height="48" viewBox="0 0 48 48"><g transform="translate(1.2,0) scale(.95,1)"><path d="M8 5 H32 V10 L40 12 V43 L26 47 L8 40 Z" fill="#e9c55d"/><path d="M15 8 L34 10 V44 L15 41 Z" fill="#fbfbfb" stroke="#d9d9d9" stroke-width=".6"/><path d="M19 14 l7 .8 v14 l-7 -1 z" fill="#7fb0e6"/><path d="M19 30 l8 .8 v9 l-8 -1.200 z" fill="#d6dde8"/><path d="M27 11 L40 13 V43 L27 46.500 Z" fill="#f4f5f7" stroke="#d4d6da" stroke-width=".6"/><path d="M30 19 l7 1 v5 l-7 -.5 z" fill="#9cc3e8"/><path d="M30 27 l7 .6 v12 l-7 1.600 z" fill="#dfe6ee"/><path d="M8 5 L18 12 V47 L8 40 Z" fill="#f7dd8b"/><path d="M8 5 L18 12 V47" fill="none" stroke="#e4c462" stroke-width=".6"/></g></svg>
<svg style="left:849px;top:6.5px;" width="48" height="48" viewBox="0 0 48 48"><g transform="translate(1.2,0) scale(.95,1)"><path d="M8 5 H32 V10 L40 12 V43 L26 47 L8 40 Z" fill="#e9c55d"/><path d="M15 8 L34 10 V44 L15 41 Z" fill="#fbfbfb" stroke="#d9d9d9" stroke-width=".6"/><path d="M19 15 l9 1 v3 l-9 -1 z M19 21 l9 1 v2 l-9 -1 z" fill="#444"/><path d="M19 27 l9 1 v10 l-9 -1.500 z" fill="#cfcfcf"/><path d="M27 11 L40 13 V43 L27 46.500 Z" fill="#f4f5f7" stroke="#d4d6da" stroke-width=".6"/><path d="M30 19 l7 1 v5 l-7 -.5 z" fill="#9cc3e8"/><path d="M30 27 l7 .6 v12 l-7 1.600 z" fill="#dfe6ee"/><path d="M8 5 L18 12 V47 L8 40 Z" fill="#f7dd8b"/><path d="M8 5 L18 12 V47" fill="none" stroke="#e4c462" stroke-width=".6"/></g></svg>
<svg style="left:1838px;top:6.5px;" width="48" height="48" viewBox="0 0 48 48"><path d="M8 5 H32 V10 L40 12 V43 L26 47 L8 40 Z" fill="#e9c55d"/><path d="M14 7 L36 9 V45 L14 42 Z" fill="#b57fd6" stroke="#8e57b5" stroke-width=".6"/><path d="M18 12 l10 1 v26 l-10 -1 z" fill="#d9b6ef"/><path d="M21 17 l2 .2 l3 10 v-10 l2 .2 v16 l-2 -.2 l-3 -10 v10 l-2 -.2 z" fill="#fff"/><path d="M28 14 L41 16 V40 L28 44 Z" fill="#f3a3c8" stroke="#d85a96" stroke-width=".6"/><circle cx="35" cy="28" r="4" fill="#fff"/><circle cx="36.500" cy="25" r="1.500" fill="#d63a82"/><path d="M8 5 L17 12 V47 L8 40 Z" fill="#f7dd8b"/></svg>
<div class="dl" style="left:1802px;top:59px;width:120px;transform:scaleX(1.0558);">Microsoft</div><div class="dl" style="left:1802px;top:74px;width:120px;transform:scaleX(1.0259);">Office</div>
<div class="dl" style="left:1880px;top:160px;text-align:left;transform-origin:0 0;transform:scaleX(1.0584);">nd</div><div class="dl" style="left:1883px;top:175px;text-align:left;transform-origin:0 0;transform:scaleX(0.7973);">...</div>
<div class="dl" style="left:1880px;top:362px;text-align:left;transform-origin:0 0;transform:scaleX(0.9565);">ns</div><div class="dl" style="left:1883px;top:377px;text-align:left;transform-origin:0 0;transform:scaleX(0.7973);">...</div><!-- back Access window -->
<div style="left:182px;top:39px;width:1667px;height:962px;background:#fff;background-clip:padding-box;border:1px solid rgba(20,30,45,.38);box-shadow:0 0 15px 1px rgba(0,0,0,.33),0 1px 4px rgba(0,0,0,.12);"></div>
<svg style="left:184px;top:46px;" width="16" height="16" viewBox="0 0 16 16"><defs><linearGradient id="alg" x1="0" y1="0" x2="1" y2="1"><stop offset="0" stop-color="#fff"/><stop offset="1" stop-color="#f7a8c6"/></linearGradient></defs><path d="M3.500 .5 H15.500 V15.500 H.5 V3.500 Z" fill="url(#alg)" stroke="#b5124f"/><path d="M2.500 13.500 L6.300 2.500 H9.700 L13.500 13.500 H10.900 L10.200 11.200 H5.800 L5.100 13.500 Z M6.500 9 H9.500 L8 4.500 Z" fill="#b5124f"/></svg><div style="left:204px;top:48px;width:1px;height:15px;background:#b9bcc2;"></div><svg style="left:212px;top:47px;" width="14" height="14" viewBox="0 0 16 16"><path d="M1 1 H15 V15 H2.500 L1 13.500 Z" fill="#3d46b5" stroke="#262d80" stroke-width=".8"/><rect x="3.500" y="1.500" width="9" height="6.500" fill="#f4f6fb"/><rect x="4.500" y="10.500" width="7" height="4.500" fill="#c9cde0"/><rect x="5.500" y="11.500" width="2.500" height="3" fill="#262d80"/></svg><svg style="left:234px;top:46px;" width="16" height="16" viewBox="0 0 16 16"><g><path d="M2 2.500 V8.500 H8 L5.800 6.300 Q9.500 3.800 11.200 7 Q12.500 10 9.500 13.500 Q15.500 9.500 13.200 5 Q10.500 .8 4.300 4.800 Z" fill="#b4b9c1" stroke="#9ea4ad" stroke-width=".5"/></g></svg><svg style="left:253px;top:53px;" width="5" height="3" viewBox="0 0 5 3"><path d="M0 0 H5 L2.5 3 Z" fill="#b0b4ba"/></svg><svg style="left:265px;top:46px;" width="16" height="16" viewBox="0 0 16 16"><g transform="translate(16,0) scale(-1,1)"><path d="M2 2.500 V8.500 H8 L5.800 6.300 Q9.500 3.800 11.200 7 Q12.500 10 9.500 13.500 Q15.500 9.500 13.200 5 Q10.500 .8 4.300 4.800 Z" fill="#b4b9c1" stroke="#9ea4ad" stroke-width=".5"/></g></svg><svg style="left:285px;top:53px;" width="5" height="3" viewBox="0 0 5 3"><path d="M0 0 H5 L2.5 3 Z" fill="#b0b4ba"/></svg><div style="left:297px;top:48px;width:1px;height:15px;background:#555;"></div><div style="left:302px;top:52px;width:7px;height:1px;background:#222;"></div><svg style="left:302px;top:54px;" width="7" height="4" viewBox="0 0 7 4"><path d="M0 0 H7 L3.5 4 Z" fill="#222"/></svg><div style="left:567px;top:40px;width:74px;height:28px;background:linear-gradient(#179db0 0,#179db0 3.500px,#86d4de 4.500px,#9bdce4 55%,#cdeff2 100%);border-left:1px solid #58b9c8;border-right:1px solid #58b9c8;"></div><div class="t" style="left:572.5px;top:47px;font-size:12px;color:#fff;line-height:16px;transform:scaleX(0.9118);text-shadow:0 0 2px #2f93a3,0 1px 2px #3a9cac;font-weight:bold;">Query Tools</div><div class="t" style="left:814.0px;top:46px;font-size:12px;color:#222;line-height:16px;transform:scaleX(0.9385);">EE Employee DB - 9.22.20 : Database (Access 2007 - 2010)  -  Microsoft Access</div><svg style="left:1729px;top:54px;" width="11" height="1" viewBox="0 0 11 1"><path d="M0 .5 H10" stroke="#8a8a8a" stroke-width="1"/></svg><svg style="left:1774px;top:49px;" width="11" height="11" viewBox="0 0 11 11"><rect x=".5" y=".5" width="9" height="9" fill="none" stroke="#8a8a8a"/></svg><svg style="left:1820px;top:49px;" width="11" height="11" viewBox="0 0 11 11"><path d="M.3 .3 L10.700 10.700 M10.700 .3 L.3 10.700" stroke="#8a8a8a" stroke-width="1" fill="none"/></svg>
<div style="left:183px;top:91px;width:1665px;height:1px;background:#74c8d6;"></div><div style="left:183px;top:68px;width:56px;height:23px;border-radius:4px 4px 0 0;border:1px solid #9c0f44;border-bottom:0;background:linear-gradient(#d8457f 0,#c01a5a 35%,#ad0f4c 65%,#c8396f 88%,#e26a9a 100%);"></div><div class="t" style="left:202.0px;top:72px;font-size:12px;color:#fff;line-height:16px;transform:scaleX(0.8714);font-weight:bold;">File</div><div class="t" style="left:256.25px;top:72px;font-size:12px;color:#3b3b3b;line-height:16px;transform:scaleX(0.9214);">Home</div><div class="t" style="left:314.5px;top:72px;font-size:12px;color:#3b3b3b;line-height:16px;transform:scaleX(0.8885);">Create</div><div class="t" style="left:375.5px;top:72px;font-size:12px;color:#3b3b3b;line-height:16px;transform:scaleX(0.9218);">External Data</div><div class="t" style="left:471.5px;top:72px;font-size:12px;color:#3b3b3b;line-height:16px;transform:scaleX(0.9456);">Database Tools</div><div style="left:567px;top:68px;width:74px;height:25px;background:linear-gradient(#e4f6f8 0,#fff 45%);border:1px solid #7fcbd8;border-bottom:0;border-radius:3px 3px 0 0;"></div><div class="t" style="left:586.5px;top:72px;font-size:12px;color:#3b3b3b;line-height:16px;transform:scaleX(0.9368);">Design</div><svg style="left:1811px;top:76px;" width="10" height="8" viewBox="0 0 10 8"><path d="M1.200 6.800 Q0 6.800 1.200 5.300 L5 1.200 L8.800 5.300 Q10 6.800 8.800 6.800 L7.300 6.800 L5 4.200 L2.700 6.800 Z" fill="#fff" stroke="#333" stroke-width="1.100" stroke-linejoin="round"/></svg><svg style="left:1828.5px;top:70.5px;" width="17" height="17" viewBox="0 0 17 17"><defs><radialGradient id="hq" cx=".4" cy=".3" r=".8"><stop offset="0" stop-color="#7fa8ea"/><stop offset="1" stop-color="#2f5fc0"/></radialGradient></defs><circle cx="8.500" cy="8.500" r="8" fill="url(#hq)" stroke="#2a4f9f" stroke-width=".6"/><text x="8.500" y="13" font-family="Liberation Sans,sans-serif" font-weight="bold" font-size="12.500" fill="#fff" text-anchor="middle">?</text></svg>
<div style="left:183px;top:92px;width:1665px;height:85px;background:linear-gradient(#fff 0,#fdfdfe 45%,#f4f5f8 80%,#eceef2 100%);"></div><div style="left:183px;top:177px;width:1665px;height:1px;background:#c9e4ea;"></div><div style="left:183px;top:178px;width:1665px;height:2px;background:#7fc7d7;"></div><div style="left:183px;top:180px;width:1665px;height:1px;background:#9fb4c4;"></div><svg style="left:192px;top:100px;" width="31" height="25" viewBox="0 0 32 26"><rect x=".5" y=".5" width="31" height="25" fill="#fff" stroke="#5b8f98"/><rect x="1" y="1" width="30" height="4" fill="#6ea5ad"/><rect x="1" y="1" width="4.500" height="24" fill="#8dbcc2"/><path d="M5.500 5 V25 M14 1 V25 M22.500 1 V25 M1 10 H31 M1 15 H31 M1 20 H31" stroke="#9fb6cf" stroke-width="1" fill="none"/><path d="M8 2.200 h3 l-1.500 1.800 z M16.500 2.200 h3 l-1.500 1.800 z M25 2.200 h3 l-1.500 1.800 z" fill="#fff"/></svg><div class="t" style="left:195.226279296875px;top:131px;font-size:12px;color:#3a3a48;line-height:16px;transform:scaleX(0.9516);">View</div><svg style="left:205px;top:150px;" width="5" height="3" viewBox="0 0 5 3"><path d="M0 0 H5 L2.5 3 Z" fill="#555"/></svg><svg style="left:245px;top:99px;" width="10" height="27" viewBox="0 0 10 27"><path d="M5 .5 Q9.300 .5 8.800 5 L6.500 17 Q5 18.500 3.500 17 L1.200 5 Q.7 .5 5 .5 Z" fill="#f0491f" stroke="#c93510" stroke-width=".6"/><circle cx="5" cy="23" r="3" fill="#f0491f" stroke="#c93510" stroke-width=".6"/></svg><div class="t" style="left:239.431513671875px;top:131px;font-size:12px;color:#3a3a48;line-height:16px;transform:scaleX(0.9147);">Run</div><div style="left:273px;top:94px;width:1px;height:82px;background:linear-gradient(rgba(190,200,210,.2),#c3ccd4 30%,#c3ccd4);"></div><div style="left:274px;top:94px;width:1px;height:82px;background:linear-gradient(rgba(255,255,255,0),#a9dbe6 40%,#a9dbe6);"></div><div class="t" style="left:210.35796875px;top:161px;font-size:12px;color:#6e6e80;line-height:16px;transform:scaleX(0.9067);">Results</div><svg style="left:285px;top:100px;" width="31" height="26" viewBox="0 0 31 26"><rect x="12.500" y=".5" width="18" height="19" fill="#fff" stroke="#2d5f86"/><rect x="13" y="1" width="17" height="4" fill="#7fb3c4"/><path d="M13 8 H30 M13 11.500 H30 M13 15 H30 M19 5 V19 M25 5 V19" stroke="#b8c7da" fill="none"/><rect x=".5" y="6.500" width="18" height="19" fill="#fff" stroke="#2d5f86"/><rect x="1" y="7" width="17" height="4" fill="#6fa6b8"/><path d="M1 14 H18 M1 17.500 H18 M1 21 H18 M7 11 V25 M13 11 V25" stroke="#b8c7da" fill="none"/></svg><div class="t" style="left:285.248076171875px;top:131px;font-size:12px;color:#3a3a48;line-height:16px;transform:scaleX(0.9148);">Select</div><svg style="left:329px;top:105px;" width="16" height="19" viewBox="0 0 16 19"><rect x=".5" y=".5" width="15" height="18" fill="#fff" stroke="#6f7fb8"/><rect x="1" y="1" width="14" height="2.500" fill="#7f8fc8"/><path d="M1 9.5 H15 M1 14.2 H15 M5.3 3.500 V18 M10.7 3.500 V18" stroke="#c3cbe4" fill="none"/></svg><svg style="left:338px;top:99px;" width="12" height="12" viewBox="0 0 12 12"><path d="M6 0 L7 4.500 L11 2 L8 5.500 L12 6.500 L8 7.500 L10.500 11 L6.500 8.500 L6 12 L5 8.500 L1.500 11 L4 7.500 L0 6.500 L4 5.500 L1 2 L5 4.500 Z" fill="#fbd34a" stroke="#fff3b0" stroke-width=".4"/></svg><svg style="left:347px;top:99px;" width="10" height="27" viewBox="0 0 10 27"><path d="M5 .5 Q9.300 .5 8.800 5 L6.500 17 Q5 18.500 3.500 17 L1.200 5 Q.7 .5 5 .5 Z" fill="#6e6e6e" stroke="#505050" stroke-width=".6"/><circle cx="5" cy="23" r="3" fill="#6e6e6e" stroke="#505050" stroke-width=".6"/></svg><div class="t" style="left:328.373427734375px;top:131px;font-size:12px;color:#3a3a48;line-height:16px;transform:scaleX(0.9628);">Make</div><div class="t" style="left:328.612138671875px;top:144px;font-size:12px;color:#3a3a48;line-height:16px;transform:scaleX(0.9682);">Table</div><svg style="left:373px;top:104px;" width="17" height="17" viewBox="0 0 17 17"><path d="M6 .5 H11 V6 H16.500 V11 H11 V16.500 H6 V11 H.5 V6 H6 Z" fill="#5fa84e" stroke="#3f7f33"/></svg><svg style="left:391px;top:99px;" width="10" height="27" viewBox="0 0 10 27"><path d="M5 .5 Q9.300 .5 8.800 5 L6.500 17 Q5 18.500 3.500 17 L1.200 5 Q.7 .5 5 .5 Z" fill="#6e6e6e" stroke="#505050" stroke-width=".6"/><circle cx="5" cy="23" r="3" fill="#6e6e6e" stroke="#505050" stroke-width=".6"/></svg><div class="t" style="left:366.1413671875px;top:131px;font-size:12px;color:#3a3a48;line-height:16px;transform:scaleX(0.9845);">Append</div><svg style="left:416px;top:103px;" width="20" height="22" viewBox="0 0 20 22"><path d="M1 13 h6 M1 15.500 h6 M1 18 h6 M1 20.500 h6" stroke="#4a6fb5" stroke-width="1" stroke-dasharray="1 1"/><path d="M4 17 L15 4 L18 6.500 L7 19.500 L3 20.500 Z" fill="#f2c14e" stroke="#9a6a1a" stroke-width=".7"/><path d="M15 4 L16.500 2.200 L19.500 4.700 L18 6.500 Z" fill="#e07a7a" stroke="#9a4a4a" stroke-width=".5"/></svg><svg style="left:434px;top:99px;" width="10" height="27" viewBox="0 0 10 27"><path d="M5 .5 Q9.300 .5 8.800 5 L6.500 17 Q5 18.500 3.500 17 L1.200 5 Q.7 .5 5 .5 Z" fill="#6e6e6e" stroke="#505050" stroke-width=".6"/><circle cx="5" cy="23" r="3" fill="#6e6e6e" stroke="#505050" stroke-width=".6"/></svg><div class="t" style="left:411.678779296875px;top:131px;font-size:12px;color:#3a3a48;line-height:16px;transform:scaleX(0.973);">Update</div><div style="left:453px;top:94px;width:50px;height:66px;border:1px solid #dca636;border-radius:3px;background:linear-gradient(#fbdc82 0,#fcd668 40%,#fcd25c 75%,#ffe88a 100%);box-shadow:inset 0 0 0 1px rgba(255,240,180,.6);"></div><svg style="left:462px;top:100px;" width="30" height="26" viewBox="0 0 30 26"><rect x=".5" y=".5" width="29" height="25" fill="#eef0f8" stroke="#4a4f8f"/><rect x="1" y="1" width="28" height="5" fill="#8c90c4"/><rect x="1" y="1" width="6" height="24" fill="#8c90c4"/><path d="M7 6 H29 M1 11 H29 M1 16 H29 M1 21 H29 M7 1 V25 M14.500 1 V25 M22 1 V25" stroke="#5a5f9f" fill="none"/></svg><div class="t" style="left:455.666318359375px;top:131px;font-size:12px;color:#3a3a48;line-height:16px;transform:scaleX(0.9303);">Crosstab</div><svg style="left:508px;top:106px;" width="18" height="17" viewBox="0 0 18 17"><path d="M1 1 Q6 4 9 7 Q12 3 16 1 Q14 5 11 9 Q14 12 17 16 Q12 14 9 11 Q5 14 2 16 Q4 12 7 9 Q3 5 1 1 Z" fill="#e8412c" stroke="#c02a18" stroke-width=".5"/></svg><svg style="left:526px;top:99px;" width="10" height="27" viewBox="0 0 10 27"><path d="M5 .5 Q9.300 .5 8.800 5 L6.500 17 Q5 18.500 3.500 17 L1.200 5 Q.7 .5 5 .5 Z" fill="#6e6e6e" stroke="#505050" stroke-width=".6"/><circle cx="5" cy="23" r="3" fill="#6e6e6e" stroke="#505050" stroke-width=".6"/></svg><div class="t" style="left:506.39822265625px;top:131px;font-size:12px;color:#3a3a48;line-height:16px;transform:scaleX(0.9572);">Delete</div><svg style="left:548px;top:99px;" width="16" height="12" viewBox="0 0 16 12"><circle cx="5" cy="6" r="4.500" fill="#fff" stroke="#3b5aa8"/><circle cx="11" cy="6" r="4.500" fill="none" stroke="#3b5aa8"/></svg><div class="t" style="left:567px;top:97px;font-size:12px;color:#3a3a48;line-height:16px;transform:scaleX(0.9825);">Union</div><svg style="left:549px;top:119px;" width="16" height="16" viewBox="0 0 16 16"><circle cx="8" cy="8" r="7.500" fill="#2f7fd0" stroke="#1c4f8f" stroke-width=".6"/><path d="M3 5 Q6 2 9 3 Q10 6 7 8 Q6 11 4 11 Q2 8 3 5 Z M10 8 Q13 7 14 9 Q13 13 10 14 Q9 11 10 8 Z" fill="#4fae4a"/></svg><div class="t" style="left:567px;top:119px;font-size:12px;color:#3a3a48;line-height:16px;transform:scaleX(0.9362);">Pass-Through</div><svg style="left:548px;top:141px;" width="17" height="16" viewBox="0 0 17 16"><path d="M1 15 L1 8 L9 15 Z" fill="#5b8fd8" stroke="#2f5fa8" stroke-width=".8"/><path d="M6 12 L14 2 L16.500 4 L8.500 14 L5.500 14.500 Z" fill="#f2c14e" stroke="#9a6a1a" stroke-width=".7"/><path d="M9 15.500 H16.500" stroke="#2f5fa8"/></svg><div class="t" style="left:567px;top:141px;font-size:12px;color:#3a3a48;line-height:16px;transform:scaleX(0.9839);">Data Definition</div><div class="t" style="left:434.5248828125px;top:161px;font-size:12px;color:#6e6e80;line-height:16px;transform:scaleX(0.9539);">Query Type</div><div style="left:653px;top:94px;width:1px;height:82px;background:linear-gradient(rgba(190,200,210,.2),#c3ccd4 30%,#c3ccd4);"></div><div style="left:654px;top:94px;width:1px;height:82px;background:linear-gradient(rgba(255,255,255,0),#a9dbe6 40%,#a9dbe6);"></div><svg style="left:671px;top:105px;" width="22" height="22" viewBox="0 0 22 22"><rect x=".5" y=".5" width="21" height="21" rx="1.500" fill="#fff" stroke="#7f93b8"/><rect x="1" y="1" width="20" height="4" fill="#4f8fe0"/><path d="M4 8 H18 M4 10.500 H18 M4 13 H18 M4 15.500 H18 M4 18 H18" stroke="#9fb0cf"/></svg><svg style="left:664px;top:97px;" width="16" height="16" viewBox="0 0 16 16"><path d="M5.500 .5 H10.500 V5.500 H15.500 V10.500 H10.500 V15.500 H5.500 V10.500 H.5 V5.500 H5.500 Z" fill="#fbd34a" stroke="#c99a1a"/></svg><div class="t" style="left:665.021201171875px;top:131px;font-size:12px;color:#3a3a48;line-height:16px;transform:scaleX(0.9314);">Show</div><div class="t" style="left:665.112138671875px;top:144px;font-size:12px;color:#3a3a48;line-height:16px;transform:scaleX(0.9682);">Table</div><div style="left:705px;top:98px;width:1px;height:62px;background:#e0e3e8;"></div><svg style="left:712px;top:97px;" width="17" height="16" viewBox="0 0 17 16"><rect x="1.500" y="1.500" width="5" height="3" fill="none" stroke="#555"/><rect x="1.500" y="11.500" width="5" height="3" fill="none" stroke="#555"/><path d="M7 8 H10" stroke="#333"/><path d="M9 6 L7 8 L9 10" fill="none" stroke="#333"/><rect x="10.500" y="6.500" width="6" height="3" fill="#5b8fd8" stroke="#2f5fa8"/></svg><div class="t" style="left:732px;top:97px;font-size:12px;color:#3a3a48;line-height:16px;transform:scaleX(0.9314);">Insert Rows</div><svg style="left:712px;top:119px;" width="17" height="16" viewBox="0 0 17 16"><rect x="1.500" y="3.500" width="9" height="3" fill="#d0d0d0"/><rect x="1.500" y="8.500" width="9" height="3" fill="#d0d0d0"/><path d="M9 3 L16 12 M16 3 L9 12" stroke="#b0b0b0" stroke-width="1.500"/></svg><div class="t" style="left:732px;top:119px;font-size:12px;color:#a0a0a0;line-height:16px;transform:scaleX(0.9332);">Delete Rows</div><svg style="left:712px;top:141px;" width="17" height="16" viewBox="0 0 17 16"><path d="M7 2 L15 10 L13.500 11.500 L5.500 3.500 Z" fill="#a0a0a0" stroke="#777" stroke-width=".6"/><path d="M2 8 h2 M1 11 h2 M4 11 h2 M1 14 h1.500 M3.500 14 h1.500 M6 14 h1.500" stroke="#555" stroke-width="1.200"/></svg><div class="t" style="left:732px;top:141px;font-size:12px;color:#3a3a48;line-height:16px;transform:scaleX(0.9606);">Builder</div><svg style="left:812px;top:97px;" width="17" height="16" viewBox="0 0 17 16"><rect x="2.500" y="1.500" width="3" height="3" fill="none" stroke="#999"/><rect x="11.500" y="1.500" width="3" height="3" fill="none" stroke="#999"/><path d="M8.500 5 V14 M6.500 12 L8.500 14 L10.500 12" fill="none" stroke="#aaa"/></svg><div class="t" style="left:831px;top:97px;font-size:12px;color:#a0a0a0;line-height:16px;transform:scaleX(0.953);">Insert Columns</div><svg style="left:812px;top:119px;" width="17" height="16" viewBox="0 0 17 16"><path d="M4 3 L13 12 M13 3 L4 12" stroke="#bbb" stroke-width="1.500"/></svg><div class="t" style="left:831px;top:119px;font-size:12px;color:#a0a0a0;line-height:16px;transform:scaleX(0.9533);">Delete Columns</div><svg style="left:812px;top:141px;" width="17" height="16" viewBox="0 0 17 16"><rect x="2.500" y="3.500" width="12" height="9" fill="#eee" stroke="#aaa"/></svg><div class="t" style="left:831px;top:141px;font-size:12px;color:#a0a0a0;line-height:16px;transform:scaleX(0.9341);">Return:</div><div class="t" style="left:781.0241015625px;top:161px;font-size:12px;color:#6e6e80;line-height:16px;transform:scaleX(0.9496);">Query Setup</div><div style="left:945px;top:94px;width:1px;height:82px;background:linear-gradient(rgba(190,200,210,.2),#c3ccd4 30%,#c3ccd4);"></div><div style="left:946px;top:94px;width:1px;height:82px;background:linear-gradient(rgba(255,255,255,0),#a9dbe6 40%,#a9dbe6);"></div><svg style="left:959px;top:98px;" width="28" height="30" viewBox="0 0 28 30"><text x="14" y="27" font-family="Liberation Sans,sans-serif" font-size="32" fill="#555" text-anchor="middle">Σ</text></svg><div class="t" style="left:957.72818359375px;top:131px;font-size:12px;color:#3a3a48;line-height:16px;transform:scaleX(0.9745);">Totals</div><svg style="left:1005px;top:98px;" width="30" height="30" viewBox="0 0 30 30"><rect x="8.500" y="1.500" width="18" height="16" fill="#dbe7fa" stroke="#3f6fc0"/><rect x="9" y="2" width="17" height="3" fill="#4f7fd8"/><rect x="2.500" y="9.500" width="18" height="17" fill="#fff" stroke="#3f6fc0"/><rect x="3" y="10" width="17" height="3" fill="#4f7fd8"/><path d="M6 17 H17 M6 21 H17" stroke="#9fb0cf"/></svg><div class="t" style="left:991.21259765625px;top:131px;font-size:12px;color:#3a3a48;line-height:16px;transform:scaleX(0.9284);">Parameters</div><div style="left:1053px;top:95px;width:102px;height:21px;border:1px solid #dca636;border-radius:3px;background:linear-gradient(#fbdc82,#fcd25c 70%,#ffe27a);"></div><svg style="left:1057px;top:97px;" width="17" height="16" viewBox="0 0 17 16"><rect x="1.500" y="3.500" width="12" height="11" fill="#fff" stroke="#777"/><path d="M3 7 H12 M3 10 H12" stroke="#999"/><path d="M7 1 L15 5 L12 9 Z" fill="#e8e0c8" stroke="#777" stroke-width=".7"/></svg><div class="t" style="left:1075px;top:97px;font-size:12px;color:#3a3a48;line-height:16px;transform:scaleX(0.95);">Property Sheet</div><div style="left:1053px;top:117px;width:92px;height:21px;border:1px solid #dca636;border-radius:3px;background:linear-gradient(#fbdc82,#fcd25c 70%,#ffe27a);"></div><svg style="left:1057px;top:119px;" width="17" height="16" viewBox="0 0 17 16"><rect x="1.500" y="2.500" width="13" height="11" fill="#fff" stroke="#777"/><rect x="2" y="3" width="12" height="3" fill="#5b8fd8"/></svg><div class="t" style="left:1075px;top:119px;font-size:12px;color:#3a3a48;line-height:16px;transform:scaleX(0.9519);">Table Names</div><div class="t" style="left:1022.741171875px;top:161px;font-size:12px;color:#6e6e80;line-height:16px;transform:scaleX(0.9739);">Show/Hide</div><div style="left:1156px;top:94px;width:1px;height:82px;background:linear-gradient(rgba(190,200,210,.2),#c3ccd4 30%,#c3ccd4);"></div><div style="left:1157px;top:94px;width:1px;height:82px;background:linear-gradient(rgba(255,255,255,0),#a9dbe6 40%,#a9dbe6);"></div>
<div style="left:183px;top:181px;width:1665px;height:796px;background:#a5acb9;"></div>
<div style="left:187px;top:182px;width:259px;height:23px;background:linear-gradient(#fff 0,#f1f3f7 50%,#dfe3eb 100%);border:1px solid #c3c8d2;border-bottom-color:#aeb4c0;"></div><div class="t" style="left:193px;top:184.5px;font-size:14px;color:#1f3a7a;line-height:19px;transform:scaleX(0.9118);">All Access Objects</div><svg style="left:408px;top:186px;" width="15" height="15" viewBox="0 0 15 15"><circle cx="7.500" cy="7.500" r="6.500" fill="#f4f5f8" stroke="#8a8f9a"/><path d="M4.500 6.500 H10.500 L7.500 10 Z" fill="#444"/></svg><div style="left:427px;top:184px;width:1px;height:19px;background:#d0d4dc;"></div><svg style="left:432px;top:189px;" width="9" height="9" viewBox="0 0 9 9"><path d="M4 1 L1 4.500 L4 8 M8 1 L5 4.500 L8 8" fill="none" stroke="#333" stroke-width="1.200"/></svg><div style="left:187px;top:205px;width:259px;height:25px;background:#e9ecf1;"></div><div style="left:189px;top:208px;width:239px;height:19px;background:#fff;border:1px solid #9aa0ab;"></div><div class="t" style="left:191px;top:209px;font-size:12px;color:#111;line-height:16px;transform:scaleX(0.7708);font-style:italic;">Search...</div><svg style="left:428.5px;top:210px;" width="14" height="14" viewBox="0 0 14 14"><circle cx="8.500" cy="5.500" r="4" fill="#eaf3ff" stroke="#2f6fc0" stroke-width="1.600"/><path d="M5.500 8.500 L1.500 12.500" stroke="#2f6fc0" stroke-width="2"/></svg><div style="left:187px;top:229px;width:259px;height:1px;background:#8d929c;"></div>
<div style="left:187px;top:230px;width:243px;height:747px;background:#fff;"></div>
<div style="left:430px;top:230px;width:17px;height:747px;background:linear-gradient(to right,#f6f7f9,#fff 40%,#f1f2f5);border-left:1px solid #e3e5ea;"></div>
<div style="left:187px;top:230px;width:243px;height:1px;background:#8d929c;"></div><div style="left:187px;top:231px;width:243px;height:18px;background:linear-gradient(to right,#dfe3ec 0,#e8ebf1 40%,#f2f3f7 62%,#dee1ea 100%);border-bottom:1px solid #cfd3dc;"></div><div class="t" style="left:196px;top:232px;font-size:12px;color:#1f3f8f;line-height:16px;transform:scaleX(0.9433);font-weight:bold;">Tables</div><svg style="left:409px;top:236px;" width="8" height="9" viewBox="0 0 8 9"><path d="M.8 4 L4 1 L7.200 4 M.8 8 L4 5 L7.200 8" fill="none" stroke="#3b4a6b" stroke-width="1.200"/></svg>
<svg style="left:198px;top:252px;" width="16" height="14" viewBox="0 0 16 14"><rect x=".5" y=".5" width="15" height="13" fill="#fff" stroke="#6a78ad"/><rect x="1" y="1" width="14" height="2.500" fill="#8d9bcf"/><path d="M1 7.0 H15 M1 10.5 H15 M5.3 3.500 V13 M10.7 3.500 V13" stroke="#c3cbe4" fill="none"/></svg><div class="t" style="left:225px;top:252px;font-size:12px;color:#3c3c3c;line-height:16px;transform:scaleX(0.8368);">T_Classes_COS</div>
<svg style="left:198px;top:276px;" width="16" height="14" viewBox="0 0 16 14"><rect x=".5" y=".5" width="15" height="13" fill="#fff" stroke="#6a78ad"/><rect x="1" y="1" width="14" height="2.500" fill="#8d9bcf"/><path d="M1 7.0 H15 M1 10.5 H15 M5.3 3.500 V13 M10.7 3.500 V13" stroke="#c3cbe4" fill="none"/></svg><div class="t" style="left:225px;top:276px;font-size:12px;color:#3c3c3c;line-height:16px;transform:scaleX(0.8949);">T_Courses_of_Study</div>
<svg style="left:198px;top:300px;" width="16" height="14" viewBox="0 0 16 14"><rect x=".5" y=".5" width="15" height="13" fill="#fff" stroke="#6a78ad"/><rect x="1" y="1" width="14" height="2.500" fill="#8d9bcf"/><path d="M1 7.0 H15 M1 10.5 H15 M5.3 3.500 V13 M10.7 3.500 V13" stroke="#c3cbe4" fill="none"/></svg><div class="t" style="left:225px;top:300px;font-size:12px;color:#3c3c3c;line-height:16px;transform:scaleX(0.8639);">T_Credits_OCFS</div>
<svg style="left:198px;top:324px;" width="16" height="14" viewBox="0 0 16 14"><rect x=".5" y=".5" width="15" height="13" fill="#fff" stroke="#6a78ad"/><rect x="1" y="1" width="14" height="2.500" fill="#8d9bcf"/><path d="M1 7.0 H15 M1 10.5 H15 M5.3 3.500 V13 M10.7 3.500 V13" stroke="#c3cbe4" fill="none"/></svg><div class="t" style="left:225px;top:324px;font-size:12px;color:#3c3c3c;line-height:16px;transform:scaleX(0.9206);">T_Education_Certificates</div>
<svg style="left:198px;top:348px;" width="16" height="14" viewBox="0 0 16 14"><rect x=".5" y=".5" width="15" height="13" fill="#fff" stroke="#6a78ad"/><rect x="1" y="1" width="14" height="2.500" fill="#8d9bcf"/><path d="M1 7.0 H15 M1 10.5 H15 M5.3 3.500 V13 M10.7 3.500 V13" stroke="#c3cbe4" fill="none"/></svg><div class="t" style="left:225px;top:348px;font-size:12px;color:#3c3c3c;line-height:16px;transform:scaleX(0.9007);">T_Employees</div>
<svg style="left:198px;top:372px;" width="16" height="14" viewBox="0 0 16 14"><rect x=".5" y=".5" width="15" height="13" fill="#fff" stroke="#6a78ad"/><rect x="1" y="1" width="14" height="2.500" fill="#8d9bcf"/><path d="M1 7.0 H15 M1 10.5 H15 M5.3 3.500 V13 M10.7 3.500 V13" stroke="#c3cbe4" fill="none"/></svg><div class="t" style="left:225px;top:372px;font-size:12px;color:#3c3c3c;line-height:16px;transform:scaleX(0.9161);">T_Employees_Training</div>
<svg style="left:198px;top:396px;" width="16" height="14" viewBox="0 0 16 14"><rect x=".5" y=".5" width="15" height="13" fill="#fff" stroke="#6a78ad"/><rect x="1" y="1" width="14" height="2.500" fill="#8d9bcf"/><path d="M1 7.0 H15 M1 10.5 H15 M5.3 3.500 V13 M10.7 3.500 V13" stroke="#c3cbe4" fill="none"/></svg><div class="t" style="left:225px;top:396px;font-size:12px;color:#3c3c3c;line-height:16px;transform:scaleX(0.9048);">T_Employees_Waivers</div>
<svg style="left:198px;top:420px;" width="16" height="14" viewBox="0 0 16 14"><rect x=".5" y=".5" width="15" height="13" fill="#fff" stroke="#6a78ad"/><rect x="1" y="1" width="14" height="2.500" fill="#8d9bcf"/><path d="M1 7.0 H15 M1 10.5 H15 M5.3 3.500 V13 M10.7 3.500 V13" stroke="#c3cbe4" fill="none"/></svg><div class="t" style="left:225px;top:420px;font-size:12px;color:#3c3c3c;line-height:16px;transform:scaleX(0.8824);">T_FirstAid_CPR_MAT</div>
<svg style="left:198px;top:444px;" width="16" height="14" viewBox="0 0 16 14"><rect x=".5" y=".5" width="15" height="13" fill="#fff" stroke="#6a78ad"/><rect x="1" y="1" width="14" height="2.500" fill="#8d9bcf"/><path d="M1 7.0 H15 M1 10.5 H15 M5.3 3.500 V13 M10.7 3.500 V13" stroke="#c3cbe4" fill="none"/></svg><div class="t" style="left:225px;top:444px;font-size:12px;color:#3c3c3c;line-height:16px;transform:scaleX(0.8948);">T_JobStatus</div>
<svg style="left:198px;top:468px;" width="16" height="14" viewBox="0 0 16 14"><rect x=".5" y=".5" width="15" height="13" fill="#fff" stroke="#6a78ad"/><rect x="1" y="1" width="14" height="2.500" fill="#8d9bcf"/><path d="M1 7.0 H15 M1 10.5 H15 M5.3 3.500 V13 M10.7 3.500 V13" stroke="#c3cbe4" fill="none"/></svg><div class="t" style="left:225px;top:468px;font-size:12px;color:#3c3c3c;line-height:16px;transform:scaleX(0.9132);">T_Lookups</div>
<svg style="left:198px;top:492px;" width="16" height="14" viewBox="0 0 16 14"><rect x=".5" y=".5" width="15" height="13" fill="#fff" stroke="#6a78ad"/><rect x="1" y="1" width="14" height="2.500" fill="#8d9bcf"/><path d="M1 7.0 H15 M1 10.5 H15 M5.3 3.500 V13 M10.7 3.500 V13" stroke="#c3cbe4" fill="none"/></svg><div class="t" style="left:225px;top:492px;font-size:12px;color:#3c3c3c;line-height:16px;transform:scaleX(0.9106);">T_Programs</div>
<svg style="left:198px;top:516px;" width="16" height="14" viewBox="0 0 16 14"><rect x=".5" y=".5" width="15" height="13" fill="#fff" stroke="#6a78ad"/><rect x="1" y="1" width="14" height="2.500" fill="#8d9bcf"/><path d="M1 7.0 H15 M1 10.5 H15 M5.3 3.500 V13 M10.7 3.500 V13" stroke="#c3cbe4" fill="none"/></svg><div class="t" style="left:225px;top:516px;font-size:12px;color:#3c3c3c;line-height:16px;transform:scaleX(0.8582);">T_Sites</div>
<svg style="left:198px;top:540px;" width="16" height="14" viewBox="0 0 16 14"><rect x=".5" y=".5" width="15" height="13" fill="#fff" stroke="#6a78ad"/><rect x="1" y="1" width="14" height="2.500" fill="#8d9bcf"/><path d="M1 7.0 H15 M1 10.5 H15 M5.3 3.500 V13 M10.7 3.500 V13" stroke="#c3cbe4" fill="none"/></svg><div class="t" style="left:225px;top:540px;font-size:12px;color:#3c3c3c;line-height:16px;transform:scaleX(0.9182);">T_TrainingCourses</div>
<svg style="left:198px;top:564px;" width="16" height="14" viewBox="0 0 16 14"><rect x=".5" y=".5" width="15" height="13" fill="#fff" stroke="#6a78ad"/><rect x="1" y="1" width="14" height="2.500" fill="#8d9bcf"/><path d="M1 7.0 H15 M1 10.5 H15 M5.3 3.500 V13 M10.7 3.500 V13" stroke="#c3cbe4" fill="none"/></svg><div class="t" style="left:225px;top:564px;font-size:12px;color:#3c3c3c;line-height:16px;transform:scaleX(0.9161);">T_TrainingCourses_Credits</div>
<div style="left:187px;top:585px;width:243px;height:1px;background:#8d929c;"></div><div style="left:187px;top:586px;width:243px;height:18px;background:linear-gradient(to right,#dfe3ec 0,#e8ebf1 40%,#f2f3f7 62%,#dee1ea 100%);border-bottom:1px solid #cfd3dc;"></div><div class="t" style="left:196px;top:587px;font-size:12px;color:#1f3f8f;line-height:16px;transform:scaleX(0.9427);font-weight:bold;">Queries</div><svg style="left:409px;top:591px;" width="8" height="9" viewBox="0 0 8 9"><path d="M.8 4 L4 1 L7.200 4 M.8 8 L4 5 L7.200 8" fill="none" stroke="#3b4a6b" stroke-width="1.200"/></svg>
<div style="left:187px;top:604px;width:243px;height:23.5px;background:#e7e9f0;"></div><svg style="left:196px;top:607px;" width="14" height="13" viewBox="0 0 14 13"><rect x=".5" y=".5" width="13" height="12" fill="#fff" stroke="#5a6a9a"/><rect x="1" y="1" width="12" height="2.500" fill="#6a78a8"/><rect x="1" y="1" width="3" height="11" fill="#6a78a8"/><path d="M5 2.200 h1 M7 2.200 h1 M9 2.200 h1 M11 2.200 h1 M1.800 5.500 h1.400 M1.800 8 h1.400 M1.800 10.500 h1.400" stroke="#fff" stroke-width=".8"/><path d="M5 5.500 H12.500 M5 8 H12.500 M5 10.500 H12.500" stroke="#9aa6c8" stroke-dasharray="1 1"/></svg><div class="t" style="left:225px;top:607px;font-size:12px;color:#3c3c3c;line-height:16px;transform:scaleX(0.9529);">qryXTABcreditHours</div>
<svg style="left:198px;top:630px;" width="16" height="16" viewBox="0 0 16 16"><rect x="5.500" y=".5" width="10" height="9" fill="#fff" stroke="#7fa3a8"/><rect x="6" y="1" width="9" height="2.500" fill="#6aa3a6"/><path d="M6 6 H15 M10.500 3.500 V9" stroke="#c3d3d8"/><path d="M12 5 h2 M12 7.500 h2" stroke="#7f93a3"/><rect x=".5" y="5.500" width="11" height="10" fill="#fff" stroke="#6f879a"/><rect x="1" y="6" width="10" height="2.500" fill="#6a95a6"/><path d="M1 11 H11 M1 13.500 H11 M4.500 8.500 V15 M8 8.500 V15" stroke="#c9d3dc"/><path d="M2 10 h1.500 M5.500 10 h1.500 M9 10 h1.500 M2 12.500 h1.500 M5.500 12.500 h1.500 M9 12.500 h1.500" stroke="#6f8397"/></svg><div class="t" style="left:225px;top:631px;font-size:12px;color:#3c3c3c;line-height:16px;transform:scaleX(0.951);">qryAllCreditsAllEmployees</div>
<svg style="left:198px;top:654px;" width="16" height="16" viewBox="0 0 16 16"><rect x="5.500" y=".5" width="10" height="9" fill="#fff" stroke="#7fa3a8"/><rect x="6" y="1" width="9" height="2.500" fill="#6aa3a6"/><path d="M6 6 H15 M10.500 3.500 V9" stroke="#c3d3d8"/><path d="M12 5 h2 M12 7.500 h2" stroke="#7f93a3"/><rect x=".5" y="5.500" width="11" height="10" fill="#fff" stroke="#6f879a"/><rect x="1" y="6" width="10" height="2.500" fill="#6a95a6"/><path d="M1 11 H11 M1 13.500 H11 M4.500 8.500 V15 M8 8.500 V15" stroke="#c9d3dc"/><path d="M2 10 h1.500 M5.500 10 h1.500 M9 10 h1.500 M2 12.500 h1.500 M5.500 12.500 h1.500 M9 12.500 h1.500" stroke="#6f8397"/></svg><div class="t" style="left:225px;top:655px;font-size:12px;color:#3c3c3c;line-height:16px;transform:scaleX(0.9516);">qryAllRequiredAllEmps</div>
<svg style="left:198px;top:678px;" width="16" height="16" viewBox="0 0 16 16"><rect x="5.500" y=".5" width="10" height="9" fill="#fff" stroke="#7fa3a8"/><rect x="6" y="1" width="9" height="2.500" fill="#6aa3a6"/><path d="M6 6 H15 M10.500 3.500 V9" stroke="#c3d3d8"/><path d="M12 5 h2 M12 7.500 h2" stroke="#7f93a3"/><rect x=".5" y="5.500" width="11" height="10" fill="#fff" stroke="#6f879a"/><rect x="1" y="6" width="10" height="2.500" fill="#6a95a6"/><path d="M1 11 H11 M1 13.500 H11 M4.500 8.500 V15 M8 8.500 V15" stroke="#c9d3dc"/><path d="M2 10 h1.500 M5.500 10 h1.500 M9 10 h1.500 M2 12.500 h1.500 M5.500 12.500 h1.500 M9 12.500 h1.500" stroke="#6f8397"/></svg><div class="t" style="left:225px;top:679px;font-size:12px;color:#3c3c3c;line-height:16px;transform:scaleX(0.9656);">qryCompletedReqTraining</div>
<svg style="left:198px;top:702px;" width="16" height="16" viewBox="0 0 16 16"><rect x="5.500" y=".5" width="10" height="9" fill="#fff" stroke="#7fa3a8"/><rect x="6" y="1" width="9" height="2.500" fill="#6aa3a6"/><path d="M6 6 H15 M10.500 3.500 V9" stroke="#c3d3d8"/><path d="M12 5 h2 M12 7.500 h2" stroke="#7f93a3"/><rect x=".5" y="5.500" width="11" height="10" fill="#fff" stroke="#6f879a"/><rect x="1" y="6" width="10" height="2.500" fill="#6a95a6"/><path d="M1 11 H11 M1 13.500 H11 M4.500 8.500 V15 M8 8.500 V15" stroke="#c9d3dc"/><path d="M2 10 h1.500 M5.500 10 h1.500 M9 10 h1.500 M2 12.500 h1.500 M5.500 12.500 h1.500 M9 12.500 h1.500" stroke="#6f8397"/></svg><div class="t" style="left:225px;top:703px;font-size:12px;color:#3c3c3c;line-height:16px;transform:scaleX(0.9435);">qryCourseCredits</div>
<svg style="left:198px;top:726px;" width="16" height="16" viewBox="0 0 16 16"><rect x="5.500" y=".5" width="10" height="9" fill="#fff" stroke="#7fa3a8"/><rect x="6" y="1" width="9" height="2.500" fill="#6aa3a6"/><path d="M6 6 H15 M10.500 3.500 V9" stroke="#c3d3d8"/><path d="M12 5 h2 M12 7.500 h2" stroke="#7f93a3"/><rect x=".5" y="5.500" width="11" height="10" fill="#fff" stroke="#6f879a"/><rect x="1" y="6" width="10" height="2.500" fill="#6a95a6"/><path d="M1 11 H11 M1 13.500 H11 M4.500 8.500 V15 M8 8.500 V15" stroke="#c9d3dc"/><path d="M2 10 h1.500 M5.500 10 h1.500 M9 10 h1.500 M2 12.500 h1.500 M5.500 12.500 h1.500 M9 12.500 h1.500" stroke="#6f8397"/></svg><div class="t" style="left:225px;top:727px;font-size:12px;color:#3c3c3c;line-height:16px;transform:scaleX(0.9681);">qryCreditHours</div>
<svg style="left:198px;top:750px;" width="16" height="16" viewBox="0 0 16 16"><rect x="5.500" y=".5" width="10" height="9" fill="#fff" stroke="#7fa3a8"/><rect x="6" y="1" width="9" height="2.500" fill="#6aa3a6"/><path d="M6 6 H15 M10.500 3.500 V9" stroke="#c3d3d8"/><path d="M12 5 h2 M12 7.500 h2" stroke="#7f93a3"/><rect x=".5" y="5.500" width="11" height="10" fill="#fff" stroke="#6f879a"/><rect x="1" y="6" width="10" height="2.500" fill="#6a95a6"/><path d="M1 11 H11 M1 13.500 H11 M4.500 8.500 V15 M8 8.500 V15" stroke="#c9d3dc"/><path d="M2 10 h1.500 M5.500 10 h1.500 M9 10 h1.500 M2 12.500 h1.500 M5.500 12.500 h1.500 M9 12.500 h1.500" stroke="#6f8397"/></svg><div class="t" style="left:225px;top:751px;font-size:12px;color:#3c3c3c;line-height:16px;transform:scaleX(0.9747);">qryCreditTotals</div>
<svg style="left:198px;top:774px;" width="16" height="16" viewBox="0 0 16 16"><rect x="5.500" y=".5" width="10" height="9" fill="#fff" stroke="#7fa3a8"/><rect x="6" y="1" width="9" height="2.500" fill="#6aa3a6"/><path d="M6 6 H15 M10.500 3.500 V9" stroke="#c3d3d8"/><path d="M12 5 h2 M12 7.500 h2" stroke="#7f93a3"/><rect x=".5" y="5.500" width="11" height="10" fill="#fff" stroke="#6f879a"/><rect x="1" y="6" width="10" height="2.500" fill="#6a95a6"/><path d="M1 11 H11 M1 13.500 H11 M4.500 8.500 V15 M8 8.500 V15" stroke="#c9d3dc"/><path d="M2 10 h1.500 M5.500 10 h1.500 M9 10 h1.500 M2 12.500 h1.500 M5.500 12.500 h1.500 M9 12.500 h1.500" stroke="#6f8397"/></svg><div class="t" style="left:225px;top:775px;font-size:12px;color:#3c3c3c;line-height:16px;transform:scaleX(0.9525);">qryCreditTotalsPerSite</div>
<svg style="left:198px;top:798px;" width="16" height="16" viewBox="0 0 16 16"><rect x="5.500" y=".5" width="10" height="9" fill="#fff" stroke="#7fa3a8"/><rect x="6" y="1" width="9" height="2.500" fill="#6aa3a6"/><path d="M6 6 H15 M10.500 3.500 V9" stroke="#c3d3d8"/><path d="M12 5 h2 M12 7.500 h2" stroke="#7f93a3"/><rect x=".5" y="5.500" width="11" height="10" fill="#fff" stroke="#6f879a"/><rect x="1" y="6" width="10" height="2.500" fill="#6a95a6"/><path d="M1 11 H11 M1 13.500 H11 M4.500 8.500 V15 M8 8.500 V15" stroke="#c9d3dc"/><path d="M2 10 h1.500 M5.500 10 h1.500 M9 10 h1.500 M2 12.500 h1.500 M5.500 12.500 h1.500 M9 12.500 h1.500" stroke="#6f8397"/></svg><div class="t" style="left:225px;top:799px;font-size:12px;color:#3c3c3c;line-height:16px;transform:scaleX(0.9357);">qryEmployeeCourses</div>
<svg style="left:198px;top:822px;" width="16" height="16" viewBox="0 0 16 16"><rect x="5.500" y=".5" width="10" height="9" fill="#fff" stroke="#7fa3a8"/><rect x="6" y="1" width="9" height="2.500" fill="#6aa3a6"/><path d="M6 6 H15 M10.500 3.500 V9" stroke="#c3d3d8"/><path d="M12 5 h2 M12 7.500 h2" stroke="#7f93a3"/><rect x=".5" y="5.500" width="11" height="10" fill="#fff" stroke="#6f879a"/><rect x="1" y="6" width="10" height="2.500" fill="#6a95a6"/><path d="M1 11 H11 M1 13.500 H11 M4.500 8.500 V15 M8 8.500 V15" stroke="#c9d3dc"/><path d="M2 10 h1.500 M5.500 10 h1.500 M9 10 h1.500 M2 12.500 h1.500 M5.500 12.500 h1.500 M9 12.500 h1.500" stroke="#6f8397"/></svg><div class="t" style="left:225px;top:823px;font-size:12px;color:#3c3c3c;line-height:16px;transform:scaleX(0.9572);">qryEmployeeCreditHours</div>
<svg style="left:198px;top:846px;" width="16" height="16" viewBox="0 0 16 16"><rect x="5.500" y=".5" width="10" height="9" fill="#fff" stroke="#7fa3a8"/><rect x="6" y="1" width="9" height="2.500" fill="#6aa3a6"/><path d="M6 6 H15 M10.500 3.500 V9" stroke="#c3d3d8"/><path d="M12 5 h2 M12 7.500 h2" stroke="#7f93a3"/><rect x=".5" y="5.500" width="11" height="10" fill="#fff" stroke="#6f879a"/><rect x="1" y="6" width="10" height="2.500" fill="#6a95a6"/><path d="M1 11 H11 M1 13.500 H11 M4.500 8.500 V15 M8 8.500 V15" stroke="#c9d3dc"/><path d="M2 10 h1.500 M5.500 10 h1.500 M9 10 h1.500 M2 12.500 h1.500 M5.500 12.500 h1.500 M9 12.500 h1.500" stroke="#6f8397"/></svg><div class="t" style="left:225px;top:847px;font-size:12px;color:#3c3c3c;line-height:16px;transform:scaleX(0.9384);">qryEmployeeCreditsPerSite</div>
<svg style="left:198px;top:870px;" width="16" height="16" viewBox="0 0 16 16"><rect x="5.500" y=".5" width="10" height="9" fill="#fff" stroke="#7fa3a8"/><rect x="6" y="1" width="9" height="2.500" fill="#6aa3a6"/><path d="M6 6 H15 M10.500 3.500 V9" stroke="#c3d3d8"/><path d="M12 5 h2 M12 7.500 h2" stroke="#7f93a3"/><rect x=".5" y="5.500" width="11" height="10" fill="#fff" stroke="#6f879a"/><rect x="1" y="6" width="10" height="2.500" fill="#6a95a6"/><path d="M1 11 H11 M1 13.500 H11 M4.500 8.500 V15 M8 8.500 V15" stroke="#c9d3dc"/><path d="M2 10 h1.500 M5.500 10 h1.500 M9 10 h1.500 M2 12.500 h1.500 M5.500 12.500 h1.500 M9 12.500 h1.500" stroke="#6f8397"/></svg><div class="t" style="left:225px;top:871px;font-size:12px;color:#3c3c3c;line-height:16px;transform:scaleX(0.9653);">qryEmployeeTotalHours</div>
<svg style="left:198px;top:894px;" width="16" height="16" viewBox="0 0 16 16"><rect x="5.500" y=".5" width="10" height="9" fill="#fff" stroke="#7fa3a8"/><rect x="6" y="1" width="9" height="2.500" fill="#6aa3a6"/><path d="M6 6 H15 M10.500 3.500 V9" stroke="#c3d3d8"/><path d="M12 5 h2 M12 7.500 h2" stroke="#7f93a3"/><rect x=".5" y="5.500" width="11" height="10" fill="#fff" stroke="#6f879a"/><rect x="1" y="6" width="10" height="2.500" fill="#6a95a6"/><path d="M1 11 H11 M1 13.500 H11 M4.500 8.500 V15 M8 8.500 V15" stroke="#c9d3dc"/><path d="M2 10 h1.500 M5.500 10 h1.500 M9 10 h1.500 M2 12.500 h1.500 M5.500 12.500 h1.500 M9 12.500 h1.500" stroke="#6f8397"/></svg><div class="t" style="left:225px;top:895px;font-size:12px;color:#3c3c3c;line-height:16px;transform:scaleX(0.9585);">qryExpiredTraining</div>
<svg style="left:198px;top:918px;" width="16" height="16" viewBox="0 0 16 16"><rect x="5.500" y=".5" width="10" height="9" fill="#fff" stroke="#7fa3a8"/><rect x="6" y="1" width="9" height="2.500" fill="#6aa3a6"/><path d="M6 6 H15 M10.500 3.500 V9" stroke="#c3d3d8"/><path d="M12 5 h2 M12 7.500 h2" stroke="#7f93a3"/><rect x=".5" y="5.500" width="11" height="10" fill="#fff" stroke="#6f879a"/><rect x="1" y="6" width="10" height="2.500" fill="#6a95a6"/><path d="M1 11 H11 M1 13.500 H11 M4.500 8.500 V15 M8 8.500 V15" stroke="#c9d3dc"/><path d="M2 10 h1.500 M5.500 10 h1.500 M9 10 h1.500 M2 12.500 h1.500 M5.500 12.500 h1.500 M9 12.500 h1.500" stroke="#6f8397"/></svg><div class="t" style="left:225px;top:919px;font-size:12px;color:#3c3c3c;line-height:16px;transform:scaleX(0.9552);">qryReportCreditTotalsPerSite</div>
<div style="left:187px;top:940.5px;width:243px;height:1px;background:#8d929c;"></div><div style="left:187px;top:941.5px;width:243px;height:18px;background:linear-gradient(to right,#dfe3ec 0,#e8ebf1 40%,#f2f3f7 62%,#dee1ea 100%);border-bottom:1px solid #cfd3dc;"></div><div class="t" style="left:196px;top:942.5px;font-size:12px;color:#1f3f8f;line-height:16px;transform:scaleX(0.9199);font-weight:bold;">Forms</div><svg style="left:409px;top:946.5px;" width="8" height="9" viewBox="0 0 8 9"><path d="M.8 4 L4 1 L7.200 4 M.8 8 L4 5 L7.200 8" fill="none" stroke="#3b4a6b" stroke-width="1.200"/></svg>
<svg style="left:198px;top:962px;" width="16" height="14" viewBox="0 0 16 14"><rect x=".5" y=".5" width="15" height="13" fill="#fff" stroke="#a04070"/><rect x="1" y="1" width="14" height="2.500" fill="#d06a9a"/><path d="M3 6.500 H7 M3 10 H7" stroke="#4a4f8f" stroke-width="1.500"/><rect x="8.500" y="5.500" width="5" height="2.500" fill="none" stroke="#4a4f8f"/><rect x="8.500" y="9" width="5" height="2.500" fill="none" stroke="#4a4f8f"/></svg><div class="t" style="left:225px;top:962px;font-size:12px;color:#3c3c3c;line-height:16px;transform:scaleX(0.9128);">F_Employee_Main</div>
<div style="left:432px;top:960px;width:14px;height:16px;background:linear-gradient(#fff,#e8eaee);border:1px solid #b4b8c2;border-radius:2px;"></div><svg style="left:433.0px;top:962.5px;" width="12" height="11" viewBox="0 0 12 11"><path d="M1.500 3 L6 8 L10.500 3 Z" fill="#2f3f6f"/></svg>
<div style="left:447px;top:182px;width:1px;height:795px;background:#b4b9c2;"></div><div style="left:448px;top:182px;width:3px;height:795px;background:#f0f2f5;"></div><div style="left:451px;top:182px;width:2px;height:795px;background:#7f8896;"></div>
<div style="left:453px;top:182px;width:1395px;height:795px;background:#e9ecf0;"></div>
<div style="left:643px;top:300px;width:1201px;height:676px;background:#fff;border:1px solid #b9bec7;box-shadow:inset 0 0 0 1px #f0f1f4,inset 0 0 0 2px #d5d9df;"></div>
<div style="left:183px;top:977px;width:1665px;height:23px;background:linear-gradient(#e9ebee 0,#dcdfe3 50%,#c6cad0 100%);border-top:1px solid #9aa0a8;"></div><div class="t" style="left:191px;top:981px;font-size:12px;color:#444;line-height:16px;transform:scaleX(0.951);">Form View</div><div class="t" style="left:1674px;top:981px;font-size:12px;color:#444;line-height:16px;transform:scaleX(0.9257);">Num Lock</div><div style="left:1735px;top:980px;width:1px;height:18px;background:#aeb3bb;"></div><div style="left:1736px;top:980px;width:1px;height:18px;background:#f4f5f7;"></div><div style="left:1812px;top:979px;width:20px;height:19px;background:linear-gradient(#fbdc82,#fcd25c);border:1px solid #dca636;border-radius:2px;"></div><svg style="left:1742px;top:982px;" width="13" height="13" viewBox="0 0 13 13"><rect x=".5" y="1.500" width="12" height="10" fill="#fff" stroke="#555"/><path d="M.5 4.500 H12.500 M4.500 4.500 V11.500 M6 7 H11 M6 9.500 H11" stroke="#555"/></svg><svg style="left:1760px;top:982px;" width="13" height="13" viewBox="0 0 13 13"><rect x=".5" y="3.500" width="10" height="8" fill="#fff" stroke="#666"/><path d="M.5 7.500 H10.500 M4 3.500 V11.500 M7.500 3.500 V11.500" stroke="#666"/><path d="M6 1 l3 1 l3 -1 v3" fill="none" stroke="#666"/></svg><svg style="left:1778px;top:982px;" width="13" height="13" viewBox="0 0 13 13"><path d="M2.500 11.500 V4.500 L5.500 1.500 H9.500 V11.500 Z" fill="#fff" stroke="#555"/><path d="M5 10 V6 M7.500 10 V4 M.5 11.500 H12.500" stroke="#555"/><path d="M10 3 h2 v8" fill="none" stroke="#666"/></svg><div class="t" style="left:1795px;top:981px;font-size:9px;color:#333;transform:scaleX(0.86);font-weight:bold;">SQL</div><svg style="left:1815px;top:982px;" width="14" height="13" viewBox="0 0 14 13"><path d="M1.500 1 V11.500 H13" fill="none" stroke="#444" stroke-width="1.300"/><path d="M3 9 L11 1.500 L12.500 3 L5 10.500 Z" fill="#555"/><path d="M4 12.500 h1 M6.500 12.500 h1 M9 12.500 h1" stroke="#444"/></svg><svg style="left:1835px;top:986px;" width="12" height="12" viewBox="0 0 12 12"><rect x="8" y="0" width="2" height="2" fill="#b0b5bd"/><rect x="4" y="4" width="2" height="2" fill="#b0b5bd"/><rect x="8" y="4" width="2" height="2" fill="#b0b5bd"/><rect x="0" y="8" width="2" height="2" fill="#b0b5bd"/><rect x="4" y="8" width="2" height="2" fill="#b0b5bd"/><rect x="8" y="8" width="2" height="2" fill="#b0b5bd"/></svg>
<div style="left:1013px;top:980px;width:1px;height:18px;background:#9aa0a8;"></div>
<div style="left:1014px;top:980px;width:1px;height:18px;background:#f4f5f7;"></div><!-- front Access window -->
<div style="left:317px;top:107px;width:1573px;height:628px;background:#fff;background-clip:padding-box;border:1px solid rgba(20,30,45,.38);box-shadow:0 0 15px 1px rgba(0,0,0,.33),0 1px 4px rgba(0,0,0,.12);"></div>
<svg style="left:319px;top:114px;" width="16" height="16" viewBox="0 0 16 16"><defs><linearGradient id="alg" x1="0" y1="0" x2="1" y2="1"><stop offset="0" stop-color="#fff"/><stop offset="1" stop-color="#f7a8c6"/></linearGradient></defs><path d="M3.500 .5 H15.500 V15.500 H.5 V3.500 Z" fill="url(#alg)" stroke="#b5124f"/><path d="M2.500 13.500 L6.300 2.500 H9.700 L13.500 13.500 H10.900 L10.200 11.200 H5.800 L5.100 13.500 Z M6.500 9 H9.500 L8 4.500 Z" fill="#b5124f"/></svg><div style="left:339px;top:116px;width:1px;height:15px;background:#b9bcc2;"></div><svg style="left:347px;top:115px;" width="14" height="14" viewBox="0 0 16 16"><path d="M1 1 H15 V15 H2.500 L1 13.500 Z" fill="#3d46b5" stroke="#262d80" stroke-width=".8"/><rect x="3.500" y="1.500" width="9" height="6.500" fill="#f4f6fb"/><rect x="4.500" y="10.500" width="7" height="4.500" fill="#c9cde0"/><rect x="5.500" y="11.500" width="2.500" height="3" fill="#262d80"/></svg><svg style="left:369px;top:114px;" width="16" height="16" viewBox="0 0 16 16"><g><path d="M2 2.500 V8.500 H8 L5.800 6.300 Q9.500 3.800 11.200 7 Q12.500 10 9.500 13.500 Q15.500 9.500 13.200 5 Q10.500 .8 4.300 4.800 Z" fill="#b4b9c1" stroke="#9ea4ad" stroke-width=".5"/></g></svg><svg style="left:388px;top:121px;" width="5" height="3" viewBox="0 0 5 3"><path d="M0 0 H5 L2.5 3 Z" fill="#b0b4ba"/></svg><svg style="left:400px;top:114px;" width="16" height="16" viewBox="0 0 16 16"><g transform="translate(16,0) scale(-1,1)"><path d="M2 2.500 V8.500 H8 L5.800 6.300 Q9.500 3.800 11.200 7 Q12.500 10 9.500 13.500 Q15.500 9.500 13.200 5 Q10.500 .8 4.300 4.800 Z" fill="#b4b9c1" stroke="#9ea4ad" stroke-width=".5"/></g></svg><svg style="left:420px;top:121px;" width="5" height="3" viewBox="0 0 5 3"><path d="M0 0 H5 L2.5 3 Z" fill="#b0b4ba"/></svg><div style="left:432px;top:116px;width:1px;height:15px;background:#555;"></div><div style="left:437px;top:120px;width:7px;height:1px;background:#222;"></div><svg style="left:437px;top:122px;" width="7" height="4" viewBox="0 0 7 4"><path d="M0 0 H7 L3.5 4 Z" fill="#222"/></svg><div style="left:702px;top:108px;width:74px;height:28px;background:linear-gradient(#179db0 0,#179db0 3.500px,#86d4de 4.500px,#9bdce4 55%,#cdeff2 100%);border-left:1px solid #58b9c8;border-right:1px solid #58b9c8;"></div><div class="t" style="left:707.5px;top:115px;font-size:12px;color:#fff;line-height:16px;transform:scaleX(0.9118);text-shadow:0 0 2px #2f93a3,0 1px 2px #3a9cac;font-weight:bold;">Query Tools</div><div class="t" style="left:902.0px;top:114px;font-size:12px;color:#222;line-height:16px;transform:scaleX(0.9385);">EE Employee DB - 9.22.20 : Database (Access 2007 - 2010)  -  Microsoft Access</div><svg style="left:1770px;top:122px;" width="11" height="1" viewBox="0 0 11 1"><path d="M0 .5 H10" stroke="#8a8a8a" stroke-width="1"/></svg><svg style="left:1815px;top:117px;" width="11" height="11" viewBox="0 0 11 11"><rect x=".5" y=".5" width="9" height="9" fill="none" stroke="#8a8a8a"/></svg><svg style="left:1861px;top:117px;" width="11" height="11" viewBox="0 0 11 11"><path d="M.3 .3 L10.700 10.700 M10.700 .3 L.3 10.700" stroke="#8a8a8a" stroke-width="1" fill="none"/></svg>
<div style="left:318px;top:159px;width:1571px;height:1px;background:#74c8d6;"></div><div style="left:318px;top:136px;width:56px;height:23px;border-radius:4px 4px 0 0;border:1px solid #9c0f44;border-bottom:0;background:linear-gradient(#d8457f 0,#c01a5a 35%,#ad0f4c 65%,#c8396f 88%,#e26a9a 100%);"></div><div class="t" style="left:337.0px;top:140px;font-size:12px;color:#fff;line-height:16px;transform:scaleX(0.8714);font-weight:bold;">File</div><div class="t" style="left:391.25px;top:140px;font-size:12px;color:#3b3b3b;line-height:16px;transform:scaleX(0.9214);">Home</div><div class="t" style="left:449.5px;top:140px;font-size:12px;color:#3b3b3b;line-height:16px;transform:scaleX(0.8885);">Create</div><div class="t" style="left:510.5px;top:140px;font-size:12px;color:#3b3b3b;line-height:16px;transform:scaleX(0.9218);">External Data</div><div class="t" style="left:606.5px;top:140px;font-size:12px;color:#3b3b3b;line-height:16px;transform:scaleX(0.9456);">Database Tools</div><div style="left:702px;top:136px;width:74px;height:25px;background:linear-gradient(#e4f6f8 0,#fff 45%);border:1px solid #7fcbd8;border-bottom:0;border-radius:3px 3px 0 0;"></div><div class="t" style="left:721.5px;top:140px;font-size:12px;color:#3b3b3b;line-height:16px;transform:scaleX(0.9368);">Design</div><svg style="left:1852px;top:144px;" width="10" height="8" viewBox="0 0 10 8"><path d="M1.200 6.800 Q0 6.800 1.200 5.300 L5 1.200 L8.800 5.300 Q10 6.800 8.800 6.800 L7.300 6.800 L5 4.200 L2.700 6.800 Z" fill="#fff" stroke="#333" stroke-width="1.100" stroke-linejoin="round"/></svg><svg style="left:1869.5px;top:138.5px;" width="17" height="17" viewBox="0 0 17 17"><defs><radialGradient id="hq" cx=".4" cy=".3" r=".8"><stop offset="0" stop-color="#7fa8ea"/><stop offset="1" stop-color="#2f5fc0"/></radialGradient></defs><circle cx="8.500" cy="8.500" r="8" fill="url(#hq)" stroke="#2a4f9f" stroke-width=".6"/><text x="8.500" y="13" font-family="Liberation Sans,sans-serif" font-weight="bold" font-size="12.500" fill="#fff" text-anchor="middle">?</text></svg>
<div style="left:318px;top:160px;width:1571px;height:85px;background:linear-gradient(#fff 0,#fdfdfe 45%,#f4f5f8 80%,#eceef2 100%);"></div><div style="left:318px;top:245px;width:1571px;height:1px;background:#c9e4ea;"></div><div style="left:318px;top:246px;width:1571px;height:2px;background:#7fc7d7;"></div><div style="left:318px;top:248px;width:1571px;height:1px;background:#9fb4c4;"></div><svg style="left:327px;top:168px;" width="31" height="25" viewBox="0 0 32 26"><rect x=".5" y=".5" width="31" height="25" fill="#fff" stroke="#5b8f98"/><rect x="1" y="1" width="30" height="4" fill="#6ea5ad"/><rect x="1" y="1" width="4.500" height="24" fill="#8dbcc2"/><path d="M5.500 5 V25 M14 1 V25 M22.500 1 V25 M1 10 H31 M1 15 H31 M1 20 H31" stroke="#9fb6cf" stroke-width="1" fill="none"/><path d="M8 2.200 h3 l-1.500 1.800 z M16.500 2.200 h3 l-1.500 1.800 z M25 2.200 h3 l-1.500 1.800 z" fill="#fff"/></svg><div class="t" style="left:330.226279296875px;top:199px;font-size:12px;color:#3a3a48;line-height:16px;transform:scaleX(0.9516);">View</div><svg style="left:340px;top:218px;" width="5" height="3" viewBox="0 0 5 3"><path d="M0 0 H5 L2.5 3 Z" fill="#555"/></svg><svg style="left:380px;top:167px;" width="10" height="27" viewBox="0 0 10 27"><path d="M5 .5 Q9.300 .5 8.800 5 L6.500 17 Q5 18.500 3.500 17 L1.200 5 Q.7 .5 5 .5 Z" fill="#f0491f" stroke="#c93510" stroke-width=".6"/><circle cx="5" cy="23" r="3" fill="#f0491f" stroke="#c93510" stroke-width=".6"/></svg><div class="t" style="left:374.431513671875px;top:199px;font-size:12px;color:#3a3a48;line-height:16px;transform:scaleX(0.9147);">Run</div><div style="left:408px;top:162px;width:1px;height:82px;background:linear-gradient(rgba(190,200,210,.2),#c3ccd4 30%,#c3ccd4);"></div><div style="left:409px;top:162px;width:1px;height:82px;background:linear-gradient(rgba(255,255,255,0),#a9dbe6 40%,#a9dbe6);"></div><div class="t" style="left:345.35796875px;top:229px;font-size:12px;color:#6e6e80;line-height:16px;transform:scaleX(0.9067);">Results</div><div style="left:414.5px;top:162px;width:42px;height:66px;border:1px solid #dca636;border-radius:3px;background:linear-gradient(#fbdc82 0,#fcd668 40%,#fcd25c 75%,#ffe88a 100%);box-shadow:inset 0 0 0 1px rgba(255,240,180,.6);"></div><svg style="left:420px;top:168px;" width="31" height="26" viewBox="0 0 31 26"><rect x="12.500" y=".5" width="18" height="19" fill="#fff" stroke="#2d5f86"/><rect x="13" y="1" width="17" height="4" fill="#7fb3c4"/><path d="M13 8 H30 M13 11.500 H30 M13 15 H30 M19 5 V19 M25 5 V19" stroke="#b8c7da" fill="none"/><rect x=".5" y="6.500" width="18" height="19" fill="#fff" stroke="#2d5f86"/><rect x="1" y="7" width="17" height="4" fill="#6fa6b8"/><path d="M1 14 H18 M1 17.500 H18 M1 21 H18 M7 11 V25 M13 11 V25" stroke="#b8c7da" fill="none"/></svg><div class="t" style="left:420.248076171875px;top:199px;font-size:12px;color:#3a3a48;line-height:16px;transform:scaleX(0.9148);">Select</div><svg style="left:464px;top:173px;" width="16" height="19" viewBox="0 0 16 19"><rect x=".5" y=".5" width="15" height="18" fill="#fff" stroke="#6f7fb8"/><rect x="1" y="1" width="14" height="2.500" fill="#7f8fc8"/><path d="M1 9.5 H15 M1 14.2 H15 M5.3 3.500 V18 M10.7 3.500 V18" stroke="#c3cbe4" fill="none"/></svg><svg style="left:473px;top:167px;" width="12" height="12" viewBox="0 0 12 12"><path d="M6 0 L7 4.500 L11 2 L8 5.500 L12 6.500 L8 7.500 L10.500 11 L6.500 8.500 L6 12 L5 8.500 L1.500 11 L4 7.500 L0 6.500 L4 5.500 L1 2 L5 4.500 Z" fill="#fbd34a" stroke="#fff3b0" stroke-width=".4"/></svg><svg style="left:482px;top:167px;" width="10" height="27" viewBox="0 0 10 27"><path d="M5 .5 Q9.300 .5 8.800 5 L6.500 17 Q5 18.500 3.500 17 L1.200 5 Q.7 .5 5 .5 Z" fill="#6e6e6e" stroke="#505050" stroke-width=".6"/><circle cx="5" cy="23" r="3" fill="#6e6e6e" stroke="#505050" stroke-width=".6"/></svg><div class="t" style="left:463.373427734375px;top:199px;font-size:12px;color:#3a3a48;line-height:16px;transform:scaleX(0.9628);">Make</div><div class="t" style="left:463.612138671875px;top:212px;font-size:12px;color:#3a3a48;line-height:16px;transform:scaleX(0.9682);">Table</div><svg style="left:508px;top:172px;" width="17" height="17" viewBox="0 0 17 17"><path d="M6 .5 H11 V6 H16.500 V11 H11 V16.500 H6 V11 H.5 V6 H6 Z" fill="#5fa84e" stroke="#3f7f33"/></svg><svg style="left:526px;top:167px;" width="10" height="27" viewBox="0 0 10 27"><path d="M5 .5 Q9.300 .5 8.800 5 L6.500 17 Q5 18.500 3.500 17 L1.200 5 Q.7 .5 5 .5 Z" fill="#6e6e6e" stroke="#505050" stroke-width=".6"/><circle cx="5" cy="23" r="3" fill="#6e6e6e" stroke="#505050" stroke-width=".6"/></svg><div class="t" style="left:501.1413671875px;top:199px;font-size:12px;color:#3a3a48;line-height:16px;transform:scaleX(0.9845);">Append</div><svg style="left:551px;top:171px;" width="20" height="22" viewBox="0 0 20 22"><path d="M1 13 h6 M1 15.500 h6 M1 18 h6 M1 20.500 h6" stroke="#4a6fb5" stroke-width="1" stroke-dasharray="1 1"/><path d="M4 17 L15 4 L18 6.500 L7 19.500 L3 20.500 Z" fill="#f2c14e" stroke="#9a6a1a" stroke-width=".7"/><path d="M15 4 L16.500 2.200 L19.500 4.700 L18 6.500 Z" fill="#e07a7a" stroke="#9a4a4a" stroke-width=".5"/></svg><svg style="left:569px;top:167px;" width="10" height="27" viewBox="0 0 10 27"><path d="M5 .5 Q9.300 .5 8.800 5 L6.500 17 Q5 18.500 3.500 17 L1.200 5 Q.7 .5 5 .5 Z" fill="#6e6e6e" stroke="#505050" stroke-width=".6"/><circle cx="5" cy="23" r="3" fill="#6e6e6e" stroke="#505050" stroke-width=".6"/></svg><div class="t" style="left:546.678779296875px;top:199px;font-size:12px;color:#3a3a48;line-height:16px;transform:scaleX(0.973);">Update</div><svg style="left:597px;top:168px;" width="30" height="26" viewBox="0 0 30 26"><rect x=".5" y=".5" width="29" height="25" fill="#eef0f8" stroke="#4a4f8f"/><rect x="1" y="1" width="28" height="5" fill="#8c90c4"/><rect x="1" y="1" width="6" height="24" fill="#8c90c4"/><path d="M7 6 H29 M1 11 H29 M1 16 H29 M1 21 H29 M7 1 V25 M14.500 1 V25 M22 1 V25" stroke="#5a5f9f" fill="none"/></svg><div class="t" style="left:590.666318359375px;top:199px;font-size:12px;color:#3a3a48;line-height:16px;transform:scaleX(0.9303);">Crosstab</div><svg style="left:643px;top:174px;" width="18" height="17" viewBox="0 0 18 17"><path d="M1 1 Q6 4 9 7 Q12 3 16 1 Q14 5 11 9 Q14 12 17 16 Q12 14 9 11 Q5 14 2 16 Q4 12 7 9 Q3 5 1 1 Z" fill="#e8412c" stroke="#c02a18" stroke-width=".5"/></svg><svg style="left:661px;top:167px;" width="10" height="27" viewBox="0 0 10 27"><path d="M5 .5 Q9.300 .5 8.800 5 L6.500 17 Q5 18.500 3.500 17 L1.200 5 Q.7 .5 5 .5 Z" fill="#6e6e6e" stroke="#505050" stroke-width=".6"/><circle cx="5" cy="23" r="3" fill="#6e6e6e" stroke="#505050" stroke-width=".6"/></svg><div class="t" style="left:641.39822265625px;top:199px;font-size:12px;color:#3a3a48;line-height:16px;transform:scaleX(0.9572);">Delete</div><svg style="left:683px;top:167px;" width="16" height="12" viewBox="0 0 16 12"><circle cx="5" cy="6" r="4.500" fill="#fff" stroke="#3b5aa8"/><circle cx="11" cy="6" r="4.500" fill="none" stroke="#3b5aa8"/></svg><div class="t" style="left:702px;top:165px;font-size:12px;color:#3a3a48;line-height:16px;transform:scaleX(0.9825);">Union</div><svg style="left:684px;top:187px;" width="16" height="16" viewBox="0 0 16 16"><circle cx="8" cy="8" r="7.500" fill="#2f7fd0" stroke="#1c4f8f" stroke-width=".6"/><path d="M3 5 Q6 2 9 3 Q10 6 7 8 Q6 11 4 11 Q2 8 3 5 Z M10 8 Q13 7 14 9 Q13 13 10 14 Q9 11 10 8 Z" fill="#4fae4a"/></svg><div class="t" style="left:702px;top:187px;font-size:12px;color:#3a3a48;line-height:16px;transform:scaleX(0.9362);">Pass-Through</div><svg style="left:683px;top:209px;" width="17" height="16" viewBox="0 0 17 16"><path d="M1 15 L1 8 L9 15 Z" fill="#5b8fd8" stroke="#2f5fa8" stroke-width=".8"/><path d="M6 12 L14 2 L16.500 4 L8.500 14 L5.500 14.500 Z" fill="#f2c14e" stroke="#9a6a1a" stroke-width=".7"/><path d="M9 15.500 H16.500" stroke="#2f5fa8"/></svg><div class="t" style="left:702px;top:209px;font-size:12px;color:#3a3a48;line-height:16px;transform:scaleX(0.9839);">Data Definition</div><div class="t" style="left:569.5248828125px;top:229px;font-size:12px;color:#6e6e80;line-height:16px;transform:scaleX(0.9539);">Query Type</div><div style="left:788px;top:162px;width:1px;height:82px;background:linear-gradient(rgba(190,200,210,.2),#c3ccd4 30%,#c3ccd4);"></div><div style="left:789px;top:162px;width:1px;height:82px;background:linear-gradient(rgba(255,255,255,0),#a9dbe6 40%,#a9dbe6);"></div><svg style="left:806px;top:173px;" width="22" height="22" viewBox="0 0 22 22"><rect x=".5" y=".5" width="21" height="21" rx="1.500" fill="#fff" stroke="#7f93b8"/><rect x="1" y="1" width="20" height="4" fill="#4f8fe0"/><path d="M4 8 H18 M4 10.500 H18 M4 13 H18 M4 15.500 H18 M4 18 H18" stroke="#9fb0cf"/></svg><svg style="left:799px;top:165px;" width="16" height="16" viewBox="0 0 16 16"><path d="M5.500 .5 H10.500 V5.500 H15.500 V10.500 H10.500 V15.500 H5.500 V10.500 H.5 V5.500 H5.500 Z" fill="#fbd34a" stroke="#c99a1a"/></svg><div class="t" style="left:800.021201171875px;top:199px;font-size:12px;color:#3a3a48;line-height:16px;transform:scaleX(0.9314);">Show</div><div class="t" style="left:800.112138671875px;top:212px;font-size:12px;color:#3a3a48;line-height:16px;transform:scaleX(0.9682);">Table</div><div style="left:840px;top:166px;width:1px;height:62px;background:#e0e3e8;"></div><svg style="left:847px;top:165px;" width="17" height="16" viewBox="0 0 17 16"><rect x="1.500" y="1.500" width="5" height="3" fill="none" stroke="#555"/><rect x="1.500" y="11.500" width="5" height="3" fill="none" stroke="#555"/><path d="M7 8 H10" stroke="#333"/><path d="M9 6 L7 8 L9 10" fill="none" stroke="#333"/><rect x="10.500" y="6.500" width="6" height="3" fill="#5b8fd8" stroke="#2f5fa8"/></svg><div class="t" style="left:867px;top:165px;font-size:12px;color:#3a3a48;line-height:16px;transform:scaleX(0.9314);">Insert Rows</div><svg style="left:847px;top:187px;" width="17" height="16" viewBox="0 0 17 16"><rect x="1.500" y="3.500" width="9" height="3" fill="#d0d0d0"/><rect x="1.500" y="8.500" width="9" height="3" fill="#d0d0d0"/><path d="M9 3 L16 12 M16 3 L9 12" stroke="#b0b0b0" stroke-width="1.500"/></svg><div class="t" style="left:867px;top:187px;font-size:12px;color:#a0a0a0;line-height:16px;transform:scaleX(0.9332);">Delete Rows</div><svg style="left:847px;top:209px;" width="17" height="16" viewBox="0 0 17 16"><path d="M7 2 L15 10 L13.500 11.500 L5.500 3.500 Z" fill="#a0a0a0" stroke="#777" stroke-width=".6"/><path d="M2 8 h2 M1 11 h2 M4 11 h2 M1 14 h1.500 M3.500 14 h1.500 M6 14 h1.500" stroke="#555" stroke-width="1.200"/></svg><div class="t" style="left:867px;top:209px;font-size:12px;color:#3a3a48;line-height:16px;transform:scaleX(0.9606);">Builder</div><svg style="left:947px;top:165px;" width="17" height="16" viewBox="0 0 17 16"><rect x="2.500" y="1.500" width="3" height="3" fill="none" stroke="#999"/><rect x="11.500" y="1.500" width="3" height="3" fill="none" stroke="#999"/><path d="M8.500 5 V14 M6.500 12 L8.500 14 L10.500 12" fill="none" stroke="#aaa"/></svg><div class="t" style="left:966px;top:165px;font-size:12px;color:#a0a0a0;line-height:16px;transform:scaleX(0.953);">Insert Columns</div><svg style="left:947px;top:187px;" width="17" height="16" viewBox="0 0 17 16"><path d="M4 3 L13 12 M13 3 L4 12" stroke="#bbb" stroke-width="1.500"/></svg><div class="t" style="left:966px;top:187px;font-size:12px;color:#a0a0a0;line-height:16px;transform:scaleX(0.9533);">Delete Columns</div><svg style="left:947px;top:209px;" width="17" height="16" viewBox="0 0 17 16"><rect x="2.500" y="3.500" width="12" height="9" fill="#eee" stroke="#aaa"/></svg><div class="t" style="left:966px;top:209px;font-size:12px;color:#a0a0a0;line-height:16px;transform:scaleX(0.9341);">Return:</div><div class="t" style="left:916.0241015625px;top:229px;font-size:12px;color:#6e6e80;line-height:16px;transform:scaleX(0.9496);">Query Setup</div><div style="left:1080px;top:162px;width:1px;height:82px;background:linear-gradient(rgba(190,200,210,.2),#c3ccd4 30%,#c3ccd4);"></div><div style="left:1081px;top:162px;width:1px;height:82px;background:linear-gradient(rgba(255,255,255,0),#a9dbe6 40%,#a9dbe6);"></div><svg style="left:1094px;top:166px;" width="28" height="30" viewBox="0 0 28 30"><text x="14" y="27" font-family="Liberation Sans,sans-serif" font-size="32" fill="#555" text-anchor="middle">Σ</text></svg><div class="t" style="left:1092.72818359375px;top:199px;font-size:12px;color:#3a3a48;line-height:16px;transform:scaleX(0.9745);">Totals</div><svg style="left:1140px;top:166px;" width="30" height="30" viewBox="0 0 30 30"><rect x="8.500" y="1.500" width="18" height="16" fill="#dbe7fa" stroke="#3f6fc0"/><rect x="9" y="2" width="17" height="3" fill="#4f7fd8"/><rect x="2.500" y="9.500" width="18" height="17" fill="#fff" stroke="#3f6fc0"/><rect x="3" y="10" width="17" height="3" fill="#4f7fd8"/><path d="M6 17 H17 M6 21 H17" stroke="#9fb0cf"/></svg><div class="t" style="left:1126.21259765625px;top:199px;font-size:12px;color:#3a3a48;line-height:16px;transform:scaleX(0.9284);">Parameters</div><div style="left:1188px;top:163px;width:102px;height:21px;border:1px solid #dca636;border-radius:3px;background:linear-gradient(#fbdc82,#fcd25c 70%,#ffe27a);"></div><svg style="left:1192px;top:165px;" width="17" height="16" viewBox="0 0 17 16"><rect x="1.500" y="3.500" width="12" height="11" fill="#fff" stroke="#777"/><path d="M3 7 H12 M3 10 H12" stroke="#999"/><path d="M7 1 L15 5 L12 9 Z" fill="#e8e0c8" stroke="#777" stroke-width=".7"/></svg><div class="t" style="left:1210px;top:165px;font-size:12px;color:#3a3a48;line-height:16px;transform:scaleX(0.95);">Property Sheet</div><div style="left:1188px;top:185px;width:92px;height:21px;border:1px solid #dca636;border-radius:3px;background:linear-gradient(#fbdc82,#fcd25c 70%,#ffe27a);"></div><svg style="left:1192px;top:187px;" width="17" height="16" viewBox="0 0 17 16"><rect x="1.500" y="2.500" width="13" height="11" fill="#fff" stroke="#777"/><rect x="2" y="3" width="12" height="3" fill="#5b8fd8"/></svg><div class="t" style="left:1210px;top:187px;font-size:12px;color:#3a3a48;line-height:16px;transform:scaleX(0.9519);">Table Names</div><div class="t" style="left:1157.741171875px;top:229px;font-size:12px;color:#6e6e80;line-height:16px;transform:scaleX(0.9739);">Show/Hide</div><div style="left:1291px;top:162px;width:1px;height:82px;background:linear-gradient(rgba(190,200,210,.2),#c3ccd4 30%,#c3ccd4);"></div><div style="left:1292px;top:162px;width:1px;height:82px;background:linear-gradient(rgba(255,255,255,0),#a9dbe6 40%,#a9dbe6);"></div>
<div style="left:318px;top:249px;width:1571px;height:463px;background:#a5acb9;"></div>
<div style="left:322px;top:250px;width:259px;height:23px;background:linear-gradient(#fff 0,#f1f3f7 50%,#dfe3eb 100%);border:1px solid #c3c8d2;border-bottom-color:#aeb4c0;"></div><div class="t" style="left:328px;top:252.5px;font-size:14px;color:#1f3a7a;line-height:19px;transform:scaleX(0.9118);">All Access Objects</div><svg style="left:543px;top:254px;" width="15" height="15" viewBox="0 0 15 15"><circle cx="7.500" cy="7.500" r="6.500" fill="#f4f5f8" stroke="#8a8f9a"/><path d="M4.500 6.500 H10.500 L7.500 10 Z" fill="#444"/></svg><div style="left:562px;top:252px;width:1px;height:19px;background:#d0d4dc;"></div><svg style="left:567px;top:257px;" width="9" height="9" viewBox="0 0 9 9"><path d="M4 1 L1 4.500 L4 8 M8 1 L5 4.500 L8 8" fill="none" stroke="#333" stroke-width="1.200"/></svg><div style="left:322px;top:273px;width:259px;height:25px;background:#e9ecf1;"></div><div style="left:324px;top:276px;width:239px;height:19px;background:#fff;border:1px solid #9aa0ab;"></div><div class="t" style="left:326px;top:277px;font-size:12px;color:#111;line-height:16px;transform:scaleX(0.7708);font-style:italic;">Search...</div><svg style="left:563.5px;top:278px;" width="14" height="14" viewBox="0 0 14 14"><circle cx="8.500" cy="5.500" r="4" fill="#eaf3ff" stroke="#2f6fc0" stroke-width="1.600"/><path d="M5.500 8.500 L1.500 12.500" stroke="#2f6fc0" stroke-width="2"/></svg><div style="left:322px;top:297px;width:259px;height:1px;background:#8d929c;"></div>
<div style="left:322px;top:298px;width:242px;height:413px;background:#fff;"></div>
<div style="left:322px;top:711px;width:259px;height:1px;background:#8f95a0;"></div>
<div class="clip" style="left:0;top:298px;width:565px;height:413px;"><div style="left:0;top:-298px;width:565px;height:1080px;"><svg style="left:333px;top:295px;" width="16" height="14" viewBox="0 0 16 14"><rect x=".5" y=".5" width="15" height="13" fill="#fff" stroke="#6a78ad"/><rect x="1" y="1" width="14" height="2.500" fill="#8d9bcf"/><path d="M1 7.0 H15 M1 10.5 H15 M5.3 3.500 V13 M10.7 3.500 V13" stroke="#c3cbe4" fill="none"/></svg><div class="t" style="left:360px;top:295px;font-size:12px;color:#3c3c3c;line-height:16px;transform:scaleX(0.9106);">T_Programs</div><svg style="left:333px;top:319px;" width="16" height="14" viewBox="0 0 16 14"><rect x=".5" y=".5" width="15" height="13" fill="#fff" stroke="#6a78ad"/><rect x="1" y="1" width="14" height="2.500" fill="#8d9bcf"/><path d="M1 7.0 H15 M1 10.5 H15 M5.3 3.500 V13 M10.7 3.500 V13" stroke="#c3cbe4" fill="none"/></svg><div class="t" style="left:360px;top:319px;font-size:12px;color:#3c3c3c;line-height:16px;transform:scaleX(0.8582);">T_Sites</div><svg style="left:333px;top:343px;" width="16" height="14" viewBox="0 0 16 14"><rect x=".5" y=".5" width="15" height="13" fill="#fff" stroke="#6a78ad"/><rect x="1" y="1" width="14" height="2.500" fill="#8d9bcf"/><path d="M1 7.0 H15 M1 10.5 H15 M5.3 3.500 V13 M10.7 3.500 V13" stroke="#c3cbe4" fill="none"/></svg><div class="t" style="left:360px;top:343px;font-size:12px;color:#3c3c3c;line-height:16px;transform:scaleX(0.9182);">T_TrainingCourses</div><svg style="left:333px;top:367px;" width="16" height="14" viewBox="0 0 16 14"><rect x=".5" y=".5" width="15" height="13" fill="#fff" stroke="#6a78ad"/><rect x="1" y="1" width="14" height="2.500" fill="#8d9bcf"/><path d="M1 7.0 H15 M1 10.5 H15 M5.3 3.500 V13 M10.7 3.500 V13" stroke="#c3cbe4" fill="none"/></svg><div class="t" style="left:360px;top:367px;font-size:12px;color:#3c3c3c;line-height:16px;transform:scaleX(0.9161);">T_TrainingCourses_Credits</div><div style="left:322px;top:388px;width:243px;height:1px;background:#8d929c;"></div><div style="left:322px;top:389px;width:243px;height:18px;background:linear-gradient(to right,#dfe3ec 0,#e8ebf1 40%,#f2f3f7 62%,#dee1ea 100%);border-bottom:1px solid #cfd3dc;"></div><div class="t" style="left:331px;top:390px;font-size:12px;color:#1f3f8f;line-height:16px;transform:scaleX(0.9427);font-weight:bold;">Queries</div><svg style="left:544px;top:394px;" width="8" height="9" viewBox="0 0 8 9"><path d="M.8 4 L4 1 L7.200 4 M.8 8 L4 5 L7.200 8" fill="none" stroke="#3b4a6b" stroke-width="1.200"/></svg><svg style="left:331px;top:410px;" width="14" height="13" viewBox="0 0 14 13"><rect x=".5" y=".5" width="13" height="12" fill="#fff" stroke="#5a6a9a"/><rect x="1" y="1" width="12" height="2.500" fill="#6a78a8"/><rect x="1" y="1" width="3" height="11" fill="#6a78a8"/><path d="M5 2.200 h1 M7 2.200 h1 M9 2.200 h1 M11 2.200 h1 M1.800 5.500 h1.400 M1.800 8 h1.400 M1.800 10.500 h1.400" stroke="#fff" stroke-width=".8"/><path d="M5 5.500 H12.500 M5 8 H12.500 M5 10.500 H12.500" stroke="#9aa6c8" stroke-dasharray="1 1"/></svg><div class="t" style="left:360px;top:410px;font-size:12px;color:#3c3c3c;line-height:16px;transform:scaleX(0.9529);">qryXTABcreditHours</div><svg style="left:333px;top:433px;" width="16" height="16" viewBox="0 0 16 16"><rect x="5.500" y=".5" width="10" height="9" fill="#fff" stroke="#7fa3a8"/><rect x="6" y="1" width="9" height="2.500" fill="#6aa3a6"/><path d="M6 6 H15 M10.500 3.500 V9" stroke="#c3d3d8"/><path d="M12 5 h2 M12 7.500 h2" stroke="#7f93a3"/><rect x=".5" y="5.500" width="11" height="10" fill="#fff" stroke="#6f879a"/><rect x="1" y="6" width="10" height="2.500" fill="#6a95a6"/><path d="M1 11 H11 M1 13.500 H11 M4.500 8.500 V15 M8 8.500 V15" stroke="#c9d3dc"/><path d="M2 10 h1.500 M5.500 10 h1.500 M9 10 h1.500 M2 12.500 h1.500 M5.500 12.500 h1.500 M9 12.500 h1.500" stroke="#6f8397"/></svg><div class="t" style="left:360px;top:434px;font-size:12px;color:#3c3c3c;line-height:16px;transform:scaleX(0.951);">qryAllCreditsAllEmployees</div><svg style="left:333px;top:457px;" width="16" height="16" viewBox="0 0 16 16"><rect x="5.500" y=".5" width="10" height="9" fill="#fff" stroke="#7fa3a8"/><rect x="6" y="1" width="9" height="2.500" fill="#6aa3a6"/><path d="M6 6 H15 M10.500 3.500 V9" stroke="#c3d3d8"/><path d="M12 5 h2 M12 7.500 h2" stroke="#7f93a3"/><rect x=".5" y="5.500" width="11" height="10" fill="#fff" stroke="#6f879a"/><rect x="1" y="6" width="10" height="2.500" fill="#6a95a6"/><path d="M1 11 H11 M1 13.500 H11 M4.500 8.500 V15 M8 8.500 V15" stroke="#c9d3dc"/><path d="M2 10 h1.500 M5.500 10 h1.500 M9 10 h1.500 M2 12.500 h1.500 M5.500 12.500 h1.500 M9 12.500 h1.500" stroke="#6f8397"/></svg><div class="t" style="left:360px;top:458px;font-size:12px;color:#3c3c3c;line-height:16px;transform:scaleX(0.9516);">qryAllRequiredAllEmps</div><svg style="left:333px;top:481px;" width="16" height="16" viewBox="0 0 16 16"><rect x="5.500" y=".5" width="10" height="9" fill="#fff" stroke="#7fa3a8"/><rect x="6" y="1" width="9" height="2.500" fill="#6aa3a6"/><path d="M6 6 H15 M10.500 3.500 V9" stroke="#c3d3d8"/><path d="M12 5 h2 M12 7.500 h2" stroke="#7f93a3"/><rect x=".5" y="5.500" width="11" height="10" fill="#fff" stroke="#6f879a"/><rect x="1" y="6" width="10" height="2.500" fill="#6a95a6"/><path d="M1 11 H11 M1 13.500 H11 M4.500 8.500 V15 M8 8.500 V15" stroke="#c9d3dc"/><path d="M2 10 h1.500 M5.500 10 h1.500 M9 10 h1.500 M2 12.500 h1.500 M5.500 12.500 h1.500 M9 12.500 h1.500" stroke="#6f8397"/></svg><div class="t" style="left:360px;top:482px;font-size:12px;color:#3c3c3c;line-height:16px;transform:scaleX(0.9656);">qryCompletedReqTraining</div><svg style="left:333px;top:505px;" width="16" height="16" viewBox="0 0 16 16"><rect x="5.500" y=".5" width="10" height="9" fill="#fff" stroke="#7fa3a8"/><rect x="6" y="1" width="9" height="2.500" fill="#6aa3a6"/><path d="M6 6 H15 M10.500 3.500 V9" stroke="#c3d3d8"/><path d="M12 5 h2 M12 7.500 h2" stroke="#7f93a3"/><rect x=".5" y="5.500" width="11" height="10" fill="#fff" stroke="#6f879a"/><rect x="1" y="6" width="10" height="2.500" fill="#6a95a6"/><path d="M1 11 H11 M1 13.500 H11 M4.500 8.500 V15 M8 8.500 V15" stroke="#c9d3dc"/><path d="M2 10 h1.500 M5.500 10 h1.500 M9 10 h1.500 M2 12.500 h1.500 M5.500 12.500 h1.500 M9 12.500 h1.500" stroke="#6f8397"/></svg><div class="t" style="left:360px;top:506px;font-size:12px;color:#3c3c3c;line-height:16px;transform:scaleX(0.9435);">qryCourseCredits</div><svg style="left:333px;top:529px;" width="16" height="16" viewBox="0 0 16 16"><rect x="5.500" y=".5" width="10" height="9" fill="#fff" stroke="#7fa3a8"/><rect x="6" y="1" width="9" height="2.500" fill="#6aa3a6"/><path d="M6 6 H15 M10.500 3.500 V9" stroke="#c3d3d8"/><path d="M12 5 h2 M12 7.500 h2" stroke="#7f93a3"/><rect x=".5" y="5.500" width="11" height="10" fill="#fff" stroke="#6f879a"/><rect x="1" y="6" width="10" height="2.500" fill="#6a95a6"/><path d="M1 11 H11 M1 13.500 H11 M4.500 8.500 V15 M8 8.500 V15" stroke="#c9d3dc"/><path d="M2 10 h1.500 M5.500 10 h1.500 M9 10 h1.500 M2 12.500 h1.500 M5.500 12.500 h1.500 M9 12.500 h1.500" stroke="#6f8397"/></svg><div class="t" style="left:360px;top:530px;font-size:12px;color:#3c3c3c;line-height:16px;transform:scaleX(0.9681);">qryCreditHours</div><svg style="left:333px;top:553px;" width="16" height="16" viewBox="0 0 16 16"><rect x="5.500" y=".5" width="10" height="9" fill="#fff" stroke="#7fa3a8"/><rect x="6" y="1" width="9" height="2.500" fill="#6aa3a6"/><path d="M6 6 H15 M10.500 3.500 V9" stroke="#c3d3d8"/><path d="M12 5 h2 M12 7.500 h2" stroke="#7f93a3"/><rect x=".5" y="5.500" width="11" height="10" fill="#fff" stroke="#6f879a"/><rect x="1" y="6" width="10" height="2.500" fill="#6a95a6"/><path d="M1 11 H11 M1 13.500 H11 M4.500 8.500 V15 M8 8.500 V15" stroke="#c9d3dc"/><path d="M2 10 h1.500 M5.500 10 h1.500 M9 10 h1.500 M2 12.500 h1.500 M5.500 12.500 h1.500 M9 12.500 h1.500" stroke="#6f8397"/></svg><div class="t" style="left:360px;top:554px;font-size:12px;color:#3c3c3c;line-height:16px;transform:scaleX(0.9747);">qryCreditTotals</div><svg style="left:333px;top:577px;" width="16" height="16" viewBox="0 0 16 16"><rect x="5.500" y=".5" width="10" height="9" fill="#fff" stroke="#7fa3a8"/><rect x="6" y="1" width="9" height="2.500" fill="#6aa3a6"/><path d="M6 6 H15 M10.500 3.500 V9" stroke="#c3d3d8"/><path d="M12 5 h2 M12 7.500 h2" stroke="#7f93a3"/><rect x=".5" y="5.500" width="11" height="10" fill="#fff" stroke="#6f879a"/><rect x="1" y="6" width="10" height="2.500" fill="#6a95a6"/><path d="M1 11 H11 M1 13.500 H11 M4.500 8.500 V15 M8 8.500 V15" stroke="#c9d3dc"/><path d="M2 10 h1.500 M5.500 10 h1.500 M9 10 h1.500 M2 12.500 h1.500 M5.500 12.500 h1.500 M9 12.500 h1.500" stroke="#6f8397"/></svg><div class="t" style="left:360px;top:578px;font-size:12px;color:#3c3c3c;line-height:16px;transform:scaleX(0.9525);">qryCreditTotalsPerSite</div><svg style="left:333px;top:601px;" width="16" height="16" viewBox="0 0 16 16"><rect x="5.500" y=".5" width="10" height="9" fill="#fff" stroke="#7fa3a8"/><rect x="6" y="1" width="9" height="2.500" fill="#6aa3a6"/><path d="M6 6 H15 M10.500 3.500 V9" stroke="#c3d3d8"/><path d="M12 5 h2 M12 7.500 h2" stroke="#7f93a3"/><rect x=".5" y="5.500" width="11" height="10" fill="#fff" stroke="#6f879a"/><rect x="1" y="6" width="10" height="2.500" fill="#6a95a6"/><path d="M1 11 H11 M1 13.500 H11 M4.500 8.500 V15 M8 8.500 V15" stroke="#c9d3dc"/><path d="M2 10 h1.500 M5.500 10 h1.500 M9 10 h1.500 M2 12.500 h1.500 M5.500 12.500 h1.500 M9 12.500 h1.500" stroke="#6f8397"/></svg><div class="t" style="left:360px;top:602px;font-size:12px;color:#3c3c3c;line-height:16px;transform:scaleX(0.9357);">qryEmployeeCourses</div><div style="left:322px;top:623px;width:243px;height:23.5px;background:#e7e9f0;"></div><svg style="left:333px;top:625px;" width="16" height="16" viewBox="0 0 16 16"><rect x="5.500" y=".5" width="10" height="9" fill="#fff" stroke="#7fa3a8"/><rect x="6" y="1" width="9" height="2.500" fill="#6aa3a6"/><path d="M6 6 H15 M10.500 3.500 V9" stroke="#c3d3d8"/><path d="M12 5 h2 M12 7.500 h2" stroke="#7f93a3"/><rect x=".5" y="5.500" width="11" height="10" fill="#fff" stroke="#6f879a"/><rect x="1" y="6" width="10" height="2.500" fill="#6a95a6"/><path d="M1 11 H11 M1 13.500 H11 M4.500 8.500 V15 M8 8.500 V15" stroke="#c9d3dc"/><path d="M2 10 h1.500 M5.500 10 h1.500 M9 10 h1.500 M2 12.500 h1.500 M5.500 12.500 h1.500 M9 12.500 h1.500" stroke="#6f8397"/></svg><div class="t" style="left:360px;top:626px;font-size:12px;color:#3c3c3c;line-height:16px;transform:scaleX(0.9572);">qryEmployeeCreditHours</div><svg style="left:333px;top:649px;" width="16" height="16" viewBox="0 0 16 16"><rect x="5.500" y=".5" width="10" height="9" fill="#fff" stroke="#7fa3a8"/><rect x="6" y="1" width="9" height="2.500" fill="#6aa3a6"/><path d="M6 6 H15 M10.500 3.500 V9" stroke="#c3d3d8"/><path d="M12 5 h2 M12 7.500 h2" stroke="#7f93a3"/><rect x=".5" y="5.500" width="11" height="10" fill="#fff" stroke="#6f879a"/><rect x="1" y="6" width="10" height="2.500" fill="#6a95a6"/><path d="M1 11 H11 M1 13.500 H11 M4.500 8.500 V15 M8 8.500 V15" stroke="#c9d3dc"/><path d="M2 10 h1.500 M5.500 10 h1.500 M9 10 h1.500 M2 12.500 h1.500 M5.500 12.500 h1.500 M9 12.500 h1.500" stroke="#6f8397"/></svg><div class="t" style="left:360px;top:650px;font-size:12px;color:#3c3c3c;line-height:16px;transform:scaleX(0.9384);">qryEmployeeCreditsPerSite</div><svg style="left:333px;top:673px;" width="16" height="16" viewBox="0 0 16 16"><rect x="5.500" y=".5" width="10" height="9" fill="#fff" stroke="#7fa3a8"/><rect x="6" y="1" width="9" height="2.500" fill="#6aa3a6"/><path d="M6 6 H15 M10.500 3.500 V9" stroke="#c3d3d8"/><path d="M12 5 h2 M12 7.500 h2" stroke="#7f93a3"/><rect x=".5" y="5.500" width="11" height="10" fill="#fff" stroke="#6f879a"/><rect x="1" y="6" width="10" height="2.500" fill="#6a95a6"/><path d="M1 11 H11 M1 13.500 H11 M4.500 8.500 V15 M8 8.500 V15" stroke="#c9d3dc"/><path d="M2 10 h1.500 M5.500 10 h1.500 M9 10 h1.500 M2 12.500 h1.500 M5.500 12.500 h1.500 M9 12.500 h1.500" stroke="#6f8397"/></svg><div class="t" style="left:360px;top:674px;font-size:12px;color:#3c3c3c;line-height:16px;transform:scaleX(0.9653);">qryEmployeeTotalHours</div><svg style="left:333px;top:697px;" width="16" height="16" viewBox="0 0 16 16"><rect x="5.500" y=".5" width="10" height="9" fill="#fff" stroke="#7fa3a8"/><rect x="6" y="1" width="9" height="2.500" fill="#6aa3a6"/><path d="M6 6 H15 M10.500 3.500 V9" stroke="#c3d3d8"/><path d="M12 5 h2 M12 7.500 h2" stroke="#7f93a3"/><rect x=".5" y="5.500" width="11" height="10" fill="#fff" stroke="#6f879a"/><rect x="1" y="6" width="10" height="2.500" fill="#6a95a6"/><path d="M1 11 H11 M1 13.500 H11 M4.500 8.500 V15 M8 8.500 V15" stroke="#c9d3dc"/><path d="M2 10 h1.500 M5.500 10 h1.500 M9 10 h1.500 M2 12.500 h1.500 M5.500 12.500 h1.500 M9 12.500 h1.500" stroke="#6f8397"/></svg><div class="t" style="left:360px;top:698px;font-size:12px;color:#3c3c3c;line-height:16px;transform:scaleX(0.9585);">qryExpiredTraining</div></div></div>
<div style="left:564px;top:298px;width:17px;height:413px;background:linear-gradient(to right,#f3f4f7,#fff 45%,#f0f1f4);border-left:1px solid #e3e5ea;"></div>
<div style="left:566px;top:299px;width:14px;height:16px;background:linear-gradient(#fff,#e8eaee);border:1px solid #b4b8c2;border-radius:2px;"></div><svg style="left:567.0px;top:301.5px;" width="12" height="11" viewBox="0 0 12 11"><path d="M1.500 8 L6 3 L10.500 8 Z" fill="#2f3f6f"/></svg>
<div style="left:566px;top:400px;width:14px;height:128px;background:linear-gradient(to right,#f4f4f5,#e4e5e8);border:1px solid #b4b8c2;border-radius:2px;"></div>
<svg style="left:569px;top:460px;" width="8" height="8" viewBox="0 0 8 8"><path d="M0 1.500 H8 M0 3.500 H8 M0 5.500 H8" stroke="#6a708a"/></svg>
<div style="left:566px;top:694px;width:14px;height:16px;background:linear-gradient(#fff,#e8eaee);border:1px solid #b4b8c2;border-radius:2px;"></div><svg style="left:567.0px;top:696.5px;" width="12" height="11" viewBox="0 0 12 11"><path d="M1.500 3 L6 8 L10.500 3 Z" fill="#2f3f6f"/></svg>
<div style="left:581px;top:250px;width:1px;height:462px;background:#b4b9c2;"></div><div style="left:582px;top:250px;width:3px;height:462px;background:#f0f2f5;"></div><div style="left:585px;top:250px;width:2px;height:462px;background:#7f8896;"></div>
<div style="left:587px;top:249px;width:961px;height:25px;background:linear-gradient(#abb1bf,#a6acba);"></div>
<svg style="left:588px;top:250px;" width="180" height="24" viewBox="0 0 180 24"><defs><linearGradient id="dtg" x1="0" y1="0" x2="0" y2="1"><stop offset="0" stop-color="#f4f5f7"/><stop offset=".55" stop-color="#e6e8ec"/><stop offset=".8" stop-color="#dcdfe4"/><stop offset="1" stop-color="#e9ecf1"/></linearGradient></defs><path d="M.5 24 V4 Q.5 .5 4 .5 H150 Q156 .5 159 5 L173 24 Z" fill="url(#dtg)" stroke="#cfd3da"/></svg>
<div style="left:0;top:0;opacity:.5;"><svg style="left:594px;top:253px;" width="16" height="16" viewBox="0 0 16 16"><rect x="5.500" y=".5" width="10" height="9" fill="#fff" stroke="#7fa3a8"/><rect x="6" y="1" width="9" height="2.500" fill="#6aa3a6"/><path d="M6 6 H15 M10.500 3.500 V9" stroke="#c3d3d8"/><path d="M12 5 h2 M12 7.500 h2" stroke="#7f93a3"/><rect x=".5" y="5.500" width="11" height="10" fill="#fff" stroke="#6f879a"/><rect x="1" y="6" width="10" height="2.500" fill="#6a95a6"/><path d="M1 11 H11 M1 13.500 H11 M4.500 8.500 V15 M8 8.500 V15" stroke="#c9d3dc"/><path d="M2 10 h1.500 M5.500 10 h1.500 M9 10 h1.500 M2 12.500 h1.500 M5.500 12.500 h1.500 M9 12.500 h1.500" stroke="#6f8397"/></svg></div>
<div class="t" style="left:617px;top:253px;font-size:12px;color:#333;line-height:16px;transform:scaleX(0.8985);font-weight:bold;">qryEmployeeCreditHours</div>
<svg style="left:1531px;top:257px;" width="9" height="9" viewBox="0 0 9 9"><path d="M1 1 L8 8 M8 1 L1 8" stroke="#333" stroke-width="1.300"/></svg>
<div style="left:587px;top:273px;width:946px;height:415px;background:#e9ecf1;"></div>
<svg style="left:587px;top:273px;" width="946" height="415" viewBox="0 0 946 415"><g transform="translate(-587,-273)" fill="none" stroke="#000"><path d="M809 341.500 H824 M857 353.500 H872 M1016 369.500 H1031 M1071 457.500 H1086" stroke-width="3"/><path d="M824 341.500 L857 353.500 M1031 369.500 L1256 332.500 H1271 M1031 369.500 L1071 457.500" stroke-width="1"/><circle cx="1270.500" cy="332.500" r="1.500" fill="#000" stroke="none"/><g font-family="Liberation Sans,sans-serif" font-weight="bold" font-size="9" fill="#000" stroke="none"><text x="815.500" y="338">1</text><text x="1074.500" y="454">1</text><text x="856" y="351" font-size="13" textLength="14" lengthAdjust="spacingAndGlyphs">∞</text><text x="1017" y="367" font-size="13" textLength="14" lengthAdjust="spacingAndGlyphs">∞</text></g></g></svg>
<div style="left:623px;top:286px;width:186px;height:320px;background:linear-gradient(#f7f7f8 0,#ececee 16px,#e2e3e6 28px,#eceef1 29px);border:1px solid #86888c;border-radius:7px 7px 0 0;box-shadow:inset 0 0 0 1px #fbfbfc;"></div><div class="t" style="left:636px;top:296px;font-size:13px;color:#444;line-height:18px;transform:scaleX(0.8586);">T_Employees</div><div style="left:630px;top:316px;width:172px;height:283px;background:#fff;border:1px solid #8a8c90;"></div><div class="clip" style="left:631px;top:317px;width:170px;height:281px;"><div class="t" style="left:31px;top:0px;font-size:12px;color:#111;line-height:16px;transform:scaleX(1.0347);">*</div><div class="t" style="left:31px;top:16px;font-size:12px;color:#111;line-height:16px;transform:scaleX(0.9165);">Employee_ID</div><svg style="left:17px;top:17px;" width="8" height="12" viewBox="0 0 8 12"><circle cx="4" cy="3.200" r="2.700" fill="#f6d24a" stroke="#8a6a10" stroke-width=".9"/><circle cx="4" cy="2.600" r=".9" fill="#fff"/><path d="M3.200 5.800 V11 L4.300 11.800 L5 11 V10 H6 V8.800 H5 V5.800 Z" fill="#e8b830" stroke="#8a6a10" stroke-width=".7"/></svg><div class="t" style="left:31px;top:32px;font-size:12px;color:#111;line-height:16px;transform:scaleX(0.9439);">Employee_Number</div><div class="t" style="left:31px;top:48px;font-size:12px;color:#111;line-height:16px;transform:scaleX(0.9157);">First_Name</div><div class="t" style="left:31px;top:64px;font-size:12px;color:#111;line-height:16px;transform:scaleX(0.9069);">Last_Name</div><div class="t" style="left:31px;top:80px;font-size:12px;color:#111;line-height:16px;transform:scaleX(0.9318);">Home_Phone</div><div class="t" style="left:31px;top:96px;font-size:12px;color:#111;line-height:16px;transform:scaleX(0.9396);">Cell_Number</div><div class="t" style="left:31px;top:112px;font-size:12px;color:#111;line-height:16px;transform:scaleX(0.9244);">Driver_License_Number</div><div class="t" style="left:31px;top:128px;font-size:12px;color:#111;line-height:16px;transform:scaleX(0.8844);">License_Expires</div><div class="t" style="left:31px;top:144px;font-size:12px;color:#111;line-height:16px;transform:scaleX(0.9079);">Driver_License</div><div class="t" style="left:31px;top:160px;font-size:12px;color:#111;line-height:16px;transform:scaleX(0.9751);">Photo</div><div class="t" style="left:31px;top:176px;font-size:12px;color:#111;line-height:16px;transform:scaleX(0.9289);">Resigned_ or_Termed</div><div class="t" style="left:31px;top:192px;font-size:12px;color:#111;line-height:16px;transform:scaleX(0.931);">End_of_Employment</div><div class="t" style="left:31px;top:208px;font-size:12px;color:#111;line-height:16px;transform:scaleX(0.9358);">Staff_Info_Comments</div><div class="t" style="left:31px;top:224px;font-size:12px;color:#111;line-height:16px;transform:scaleX(0.9049);">HomeSiteID_FK</div><div class="t" style="left:31px;top:240px;font-size:12px;color:#111;line-height:16px;transform:scaleX(0.9558);">HighestDegree</div></div>
<div style="left:872px;top:282px;width:144px;height:247px;background:linear-gradient(#f7f7f8 0,#ececee 16px,#e2e3e6 28px,#eceef1 29px);border:1px solid #86888c;border-radius:7px 7px 0 0;box-shadow:inset 0 0 0 1px #fbfbfc;"></div><div class="t" style="left:885px;top:292px;font-size:13px;color:#444;line-height:18px;transform:scaleX(0.8559);">T_Employees_Trainin...</div><div style="left:879px;top:312px;width:130px;height:210px;background:#fff;border:1px solid #8a8c90;"></div><div class="clip" style="left:880px;top:313px;width:128px;height:208px;"><div class="t" style="left:31px;top:0px;font-size:12px;color:#111;line-height:16px;transform:scaleX(1.0347);">*</div><div class="t" style="left:31px;top:16px;font-size:12px;color:#111;line-height:16px;transform:scaleX(0.8242);">ETCC_ID</div><svg style="left:17px;top:17px;" width="8" height="12" viewBox="0 0 8 12"><circle cx="4" cy="3.200" r="2.700" fill="#f6d24a" stroke="#8a6a10" stroke-width=".9"/><circle cx="4" cy="2.600" r=".9" fill="#fff"/><path d="M3.200 5.800 V11 L4.300 11.800 L5 11 V10 H6 V8.800 H5 V5.800 Z" fill="#e8b830" stroke="#8a6a10" stroke-width=".7"/></svg><div class="t" style="left:31px;top:32px;font-size:12px;color:#111;line-height:16px;transform:scaleX(0.8974);">EmployeeID_FK</div><div class="t" style="left:31px;top:48px;font-size:12px;color:#111;line-height:16px;transform:scaleX(0.9127);">TrainingCourseID_FK</div><div class="t" style="left:31px;top:64px;font-size:12px;color:#111;line-height:16px;transform:scaleX(0.9304);">CourseDate</div><div class="t" style="left:31px;top:80px;font-size:12px;color:#111;line-height:16px;transform:scaleX(0.9571);">Certificate</div></div>
<div style="left:1086px;top:402px;width:171px;height:206px;background:linear-gradient(#f7f7f8 0,#ececee 16px,#e2e3e6 28px,#eceef1 29px);border:1px solid #86888c;border-radius:7px 7px 0 0;box-shadow:inset 0 0 0 1px #fbfbfc;"></div><div class="t" style="left:1099px;top:412px;font-size:13px;color:#444;line-height:18px;transform:scaleX(0.8755);">T_TrainingCourses</div><div style="left:1093px;top:432px;width:157px;height:169px;background:#fff;border:1px solid #8a8c90;"></div><div class="clip" style="left:1094px;top:433px;width:155px;height:167px;"><div class="t" style="left:31px;top:0px;font-size:12px;color:#111;line-height:16px;transform:scaleX(1.0347);">*</div><div class="t" style="left:31px;top:16px;font-size:12px;color:#111;line-height:16px;transform:scaleX(0.9435);">TrainingCourseID</div><svg style="left:17px;top:17px;" width="8" height="12" viewBox="0 0 8 12"><circle cx="4" cy="3.200" r="2.700" fill="#f6d24a" stroke="#8a6a10" stroke-width=".9"/><circle cx="4" cy="2.600" r=".9" fill="#fff"/><path d="M3.200 5.800 V11 L4.300 11.800 L5 11 V10 H6 V8.800 H5 V5.800 Z" fill="#e8b830" stroke="#8a6a10" stroke-width=".7"/></svg><div class="t" style="left:31px;top:32px;font-size:12px;color:#111;line-height:16px;transform:scaleX(0.9474);">Training_Title</div><div class="t" style="left:31px;top:48px;font-size:12px;color:#111;line-height:16px;transform:scaleX(0.9538);">Sponsoring_Organization</div><div class="t" style="left:31px;top:64px;font-size:12px;color:#111;line-height:16px;transform:scaleX(0.9379);">Type_Training</div><div class="t" style="left:31px;top:80px;font-size:12px;color:#111;line-height:16px;transform:scaleX(0.9407);">Required_Training</div><div class="t" style="left:31px;top:96px;font-size:12px;color:#111;line-height:16px;transform:scaleX(0.9379);">ExpirationInYears</div></div>
<div style="left:1271px;top:277px;width:225px;height:327px;background:linear-gradient(#f7f7f8 0,#ececee 16px,#e2e3e6 28px,#eceef1 29px);border:1px solid #86888c;border-radius:7px 7px 0 0;box-shadow:inset 0 0 0 1px #fbfbfc;"></div><div class="t" style="left:1284px;top:287px;font-size:13px;color:#444;line-height:18px;transform:scaleX(0.9085);">qryXTABcreditHours</div><div style="left:1278px;top:307px;width:211px;height:290px;background:#fff;border:1px solid #8a8c90;"></div><div class="clip" style="left:1279px;top:308px;width:209px;height:288px;"><div class="t" style="left:31px;top:0px;font-size:12px;color:#111;line-height:16px;transform:scaleX(1.0347);">*</div><div class="t" style="left:31px;top:16px;font-size:12px;color:#111;line-height:16px;transform:scaleX(0.9127);">TrainingCourseID_FK</div><div class="t" style="left:31px;top:32px;font-size:12px;color:#111;line-height:16px;transform:scaleX(0.9474);">Training_Title</div><div class="t" style="left:31px;top:48px;font-size:12px;color:#111;line-height:16px;transform:scaleX(0.957);">Total Of Credit_Hours</div><div class="t" style="left:31px;top:64px;font-size:12px;color:#111;line-height:16px;transform:scaleX(0.9574);">1 Principles of Early Childhood Development</div><div class="t" style="left:31px;top:80px;font-size:12px;color:#111;line-height:16px;transform:scaleX(0.9757);">2 Nutrition and Health Needs of Infants</div><div class="t" style="left:31px;top:96px;font-size:12px;color:#111;line-height:16px;transform:scaleX(0.9473);">3 Child Day Care Development</div><div class="t" style="left:31px;top:112px;font-size:12px;color:#111;line-height:16px;transform:scaleX(0.9352);">4 Safety and Security Procedures</div><div class="t" style="left:31px;top:128px;font-size:12px;color:#111;line-height:16px;transform:scaleX(0.9468);">5 Business Record Maintenance and Management</div><div class="t" style="left:31px;top:144px;font-size:12px;color:#111;line-height:16px;transform:scaleX(0.9708);">6 Child Abuse and Maltreatment</div><div class="t" style="left:31px;top:160px;font-size:12px;color:#111;line-height:16px;transform:scaleX(0.9516);">7 Statutes and Regulations Pertaining</div><div class="t" style="left:31px;top:176px;font-size:12px;color:#111;line-height:16px;transform:scaleX(0.9516);">8 Statutes and Regulations Pertaining</div><div class="t" style="left:31px;top:192px;font-size:12px;color:#111;line-height:16px;transform:scaleX(0.9308);">9 Shaken Baby Syndrome</div><div class="t" style="left:31px;top:208px;font-size:12px;color:#111;line-height:16px;transform:scaleX(0.9907);">Non-Credit</div></div>
<div style="left:1533px;top:273px;width:15px;height:415px;background:linear-gradient(to right,#f3f4f7,#fff 45%,#f0f1f4);"></div>
<div style="left:1533px;top:274px;width:14px;height:15px;background:linear-gradient(#fff,#e8eaee);border:1px solid #b4b8c2;border-radius:2px;"></div><svg style="left:1534.0px;top:276.0px;" width="12" height="11" viewBox="0 0 12 11"><path d="M1.500 8 L6 3 L10.500 8 Z" fill="#2f3f6f"/></svg>
<div style="left:1533px;top:291px;width:14px;height:16px;background:linear-gradient(to right,#fff,#eceef2);border:1px solid #b4b8c2;border-radius:2px;"></div>
<svg style="left:1536px;top:295px;" width="8" height="8" viewBox="0 0 8 8"><path d="M0 1.500 H8 M0 3.500 H8 M0 5.500 H8" stroke="#6a708a"/></svg>
<div style="left:1533px;top:671px;width:14px;height:15px;background:linear-gradient(#fff,#e8eaee);border:1px solid #b4b8c2;border-radius:2px;"></div><svg style="left:1534.0px;top:673.0px;" width="12" height="11" viewBox="0 0 12 11"><path d="M1.500 3 L6 8 L10.500 3 Z" fill="#2f3f6f"/></svg>
<div style="left:587px;top:688px;width:961px;height:16px;background:linear-gradient(#f3f4f7,#fff 45%,#f0f1f4);"></div>
<div style="left:588px;top:688px;width:15px;height:15px;background:linear-gradient(#fff,#e8eaee);border:1px solid #b4b8c2;border-radius:2px;"></div><svg style="left:589.5px;top:690.0px;" width="12" height="11" viewBox="0 0 12 11"><path d="M8 1 L3 5.500 L8 10 Z" fill="#2f3f6f"/></svg>
<div style="left:605px;top:688px;width:16px;height:15px;background:linear-gradient(#fff,#eceef2);border:1px solid #b4b8c2;border-radius:2px;"></div>
<svg style="left:609px;top:692px;" width="8" height="8" viewBox="0 0 8 8"><path d="M1.500 0 V8 M3.500 0 V8 M5.500 0 V8" stroke="#6a708a"/></svg>
<div style="left:1516px;top:688px;width:15px;height:15px;background:linear-gradient(#fff,#e8eaee);border:1px solid #b4b8c2;border-radius:2px;"></div><svg style="left:1517.5px;top:690.0px;" width="12" height="11" viewBox="0 0 12 11"><path d="M4 1 L9 5.500 L4 10 Z" fill="#2f3f6f"/></svg>
<div style="left:587px;top:704px;width:961px;height:7px;background:linear-gradient(#6f7396 0,#8e92b3 2px,#a6a9c6 5px,#c3c5d8 7px);"></div>
<svg style="left:1050px;top:705px;" width="36" height="5" viewBox="0 0 36 5"><rect x="2" y="1" width="2" height="2" fill="#fff"/><rect x="6" y="1" width="2" height="2" fill="#fff"/><rect x="10" y="1" width="2" height="2" fill="#fff"/><rect x="14" y="1" width="2" height="2" fill="#fff"/><rect x="18" y="1" width="2" height="2" fill="#fff"/><rect x="22" y="1" width="2" height="2" fill="#fff"/><rect x="26" y="1" width="2" height="2" fill="#fff"/><rect x="30" y="1" width="2" height="2" fill="#fff"/><rect x="34" y="1" width="2" height="2" fill="#fff"/></svg>
<div style="left:1548px;top:250px;width:340px;height:462px;background:#e9ecf1;border:1px solid #9aa0ab;border-top-color:#8f95a0;"></div>
<div style="left:1550px;top:251px;width:337px;height:23px;background:#cdd3dd;"></div>
<div class="t" style="left:1552px;top:253px;font-size:14px;color:#444;line-height:19px;transform:scaleX(0.8248);">Property Sheet</div>
<svg style="left:1871px;top:258px;" width="9" height="9" viewBox="0 0 9 9"><path d="M1 1 L8 8 M8 1 L1 8" stroke="#333" stroke-width="1.800"/></svg>
<div class="t" style="left:1553px;top:274px;font-size:12px;color:#444;line-height:16px;transform:scaleX(0.9531);">Selection type:</div>
<div style="left:1551px;top:311px;width:333px;height:397px;background:#fff;border:1px solid #d4d8df;"></div>
<div style="left:1599px;top:294px;width:43px;height:18px;background:#eceef2;border:1px solid #cdd1d9;border-bottom:0;"></div>
<div class="t" style="left:1601px;top:295px;font-size:12px;color:#111;line-height:16px;transform:scaleX(0.9909);">Lookup</div>
<div style="left:1551px;top:291px;width:49px;height:21px;background:#fff;border:1px solid #d4d8df;border-bottom:0;"></div>
<div class="t" style="left:1555.5px;top:293px;font-size:12px;color:#111;line-height:16px;transform:scaleX(0.9253);">General</div>
<div style="left:318px;top:712px;width:1571px;height:22px;background:linear-gradient(#e9ebee 0,#dcdfe3 50%,#c6cad0 100%);border-top:1px solid #9aa0a8;"></div><div class="t" style="left:1715px;top:716px;font-size:12px;color:#444;line-height:16px;transform:scaleX(0.9257);">Num Lock</div><div style="left:1776px;top:715px;width:1px;height:18px;background:#aeb3bb;"></div><div style="left:1777px;top:715px;width:1px;height:18px;background:#f4f5f7;"></div><div style="left:1853px;top:714px;width:20px;height:19px;background:linear-gradient(#fbdc82,#fcd25c);border:1px solid #dca636;border-radius:2px;"></div><svg style="left:1783px;top:717px;" width="13" height="13" viewBox="0 0 13 13"><rect x=".5" y="1.500" width="12" height="10" fill="#fff" stroke="#555"/><path d="M.5 4.500 H12.500 M4.500 4.500 V11.500 M6 7 H11 M6 9.500 H11" stroke="#555"/></svg><svg style="left:1801px;top:717px;" width="13" height="13" viewBox="0 0 13 13"><rect x=".5" y="3.500" width="10" height="8" fill="#fff" stroke="#666"/><path d="M.5 7.500 H10.500 M4 3.500 V11.500 M7.500 3.500 V11.500" stroke="#666"/><path d="M6 1 l3 1 l3 -1 v3" fill="none" stroke="#666"/></svg><svg style="left:1819px;top:717px;" width="13" height="13" viewBox="0 0 13 13"><path d="M2.500 11.500 V4.500 L5.500 1.500 H9.500 V11.500 Z" fill="#fff" stroke="#555"/><path d="M5 10 V6 M7.500 10 V4 M.5 11.500 H12.500" stroke="#555"/><path d="M10 3 h2 v8" fill="none" stroke="#666"/></svg><div class="t" style="left:1836px;top:716px;font-size:9px;color:#333;transform:scaleX(0.86);font-weight:bold;">SQL</div><svg style="left:1856px;top:717px;" width="14" height="13" viewBox="0 0 14 13"><path d="M1.500 1 V11.500 H13" fill="none" stroke="#444" stroke-width="1.300"/><path d="M3 9 L11 1.500 L12.500 3 L5 10.500 Z" fill="#555"/><path d="M4 12.500 h1 M6.500 12.500 h1 M9 12.500 h1" stroke="#444"/></svg><svg style="left:1876px;top:721px;" width="12" height="12" viewBox="0 0 12 12"><rect x="8" y="0" width="2" height="2" fill="#b0b5bd"/><rect x="4" y="4" width="2" height="2" fill="#b0b5bd"/><rect x="8" y="4" width="2" height="2" fill="#b0b5bd"/><rect x="0" y="8" width="2" height="2" fill="#b0b5bd"/><rect x="4" y="8" width="2" height="2" fill="#b0b5bd"/><rect x="8" y="8" width="2" height="2" fill="#b0b5bd"/></svg><!-- parameter dialog -->
<div style="left:866px;top:150px;width:342px;height:117px;background:#f0f0f0;border:1px solid #4a4a4a;box-shadow:0 0 12px 1px rgba(0,0,0,.3),0 2px 6px rgba(0,0,0,.15);"></div>
<div style="left:867px;top:151px;width:340px;height:25px;background:#fff;"></div>
<div class="t" style="left:870px;top:155px;font-size:12px;color:#000;line-height:16px;transform:scaleX(0.9493);">Enter Parameter Value</div>
<div class="t" style="left:1136.0px;top:155px;font-size:12px;color:#000;line-height:16px;transform:scaleX(0.8993);">?</div>
<svg style="left:1179px;top:158px;" width="11" height="11" viewBox="0 0 11 11"><path d="M.5 .5 L10.500 10.500 M10.500 .5 L.5 10.500" stroke="#111" stroke-width="1.100"/></svg>
<div class="t" style="left:873.5px;top:182px;font-size:11px;color:#000;line-height:16px;transform:scaleX(0.9616);">qryXTABcreditHours.Business Record Maintenance and Management</div>
<div style="left:873px;top:206px;width:328px;height:20px;background:#fff;border:1px solid #7a7a7a;"></div>
<div style="left:876px;top:209px;width:1px;height:14px;background:#000;"></div>
<div style="left:1043px;top:237px;width:73px;height:21px;background:#e1e1e1;border:2px solid #0078d7;"></div>
<div class="t" style="left:1071.5px;top:240px;font-size:11px;color:#000;line-height:16px;transform:scaleX(0.8802);">OK</div>
<div style="left:1127px;top:237px;width:73px;height:21px;background:#e1e1e1;border:1px solid #adadad;"></div>
<div class="t" style="left:1146.0px;top:240px;font-size:11px;color:#000;line-height:16px;transform:scaleX(0.9343);">Cancel</div><div style="left:0px;top:1040px;width:1920px;height:40px;background:linear-gradient(to right,#28393f 0,#27373e 900px,#212e3a 1400px,#1b2434 1920px);"></div>
<svg style="left:16px;top:1052px;" width="17" height="17" viewBox="0 0 17 17"><path d="M0 2.400 L7.200 1.300 V8 H0 Z M8.100 1.200 L17 0 V8 H8.100 Z M0 8.900 H7.200 V15.600 L0 14.600 Z M8.100 8.900 H17 V17 L8.100 15.800 Z" fill="#fff"/></svg>
<div style="left:48px;top:1040px;width:344px;height:40px;background:#f2f2f2;border:1px solid #d9d9d9;border-bottom:0;border-top-color:#e6e6e6;"></div>
<svg style="left:59px;top:1051px;" width="18" height="18" viewBox="0 0 18 18"><circle cx="11" cy="7" r="5.200" fill="none" stroke="#1f1f1f" stroke-width="1.400"/><path d="M7.300 10.800 L1 17" stroke="#1f1f1f" stroke-width="1.500"/></svg>
<div class="t" style="left:88px;top:1051px;font-size:15px;color:#2b2b2b;line-height:20px;transform:scaleX(0.97);">Type here to search</div>
<div style="left:398px;top:1052px;width:1px;height:17px;background:#4a565f;"></div>
<div style="left:401px;top:1052px;width:1px;height:17px;background:#4a565f;"></div>
<div style="left:856px;top:1040px;width:46px;height:40px;background:#4a565c;"></div>
<div style="left:902px;top:1040px;width:1px;height:40px;background:#3a454b;"></div>
<svg style="left:426.0px;top:1048.0px;" width="24" height="24" viewBox="0 0 24 24"><defs><linearGradient id="eg1" x1="0" y1="0" x2="1" y2="1"><stop offset="0" stop-color="#35c1f1"/><stop offset=".6" stop-color="#0c59a4"/><stop offset="1" stop-color="#114a8b"/></linearGradient><linearGradient id="eg2" x1="0" y1="0" x2="1" y2="0"><stop offset="0" stop-color="#2a86dc"/><stop offset=".45" stop-color="#2cb5cf"/><stop offset=".8" stop-color="#4fd06a"/><stop offset="1" stop-color="#7bdc55"/></linearGradient></defs><circle cx="12" cy="12" r="11.5" fill="url(#eg1)"/><path d="M1 10 C2 4 7 .5 12 .5 C18 .5 23.5 5 23.5 11 C23.5 14 21 16.5 18 16.5 C15 16.5 14.3 15 14.6 14 C15.5 12.5 15.5 9.5 12 8.5 C7 7.5 2.5 10 1 14 Z" fill="url(#eg2)"/><path d="M9 11.5 C7 15 9 20.5 15 21.5 C18 22 20.5 20.5 22 18.5 C19 20 14 19.5 12.2 16.2 C11.2 14.5 11.5 12.8 12.6 11.6 C11.5 10.6 10 10.7 9 11.5 Z" fill="#0b4f96"/></svg>
<svg style="left:475.0px;top:1048.0px;" width="24" height="24" viewBox="0 0 24 24"><path d="M1 5 h8 l2 2 h12 v12 h-22 z" fill="#f7b928"/><path d="M1 9 h22 v11 h-22 z" fill="#fcd462"/><path d="M6 15 h12 v5 h-12 z" fill="#3a92d8"/><path d="M9 17.5 h6 v2.5 h-6 z" fill="#fcd462"/></svg>
<svg style="left:524.0px;top:1048.0px;" width="24" height="24" viewBox="0 0 24 24"><path d="M8 6 V4 a4 3 0 0 1 8 0 V6" fill="none" stroke="#e8e8e8" stroke-width="1.5"/><path d="M1 6 h22 v17 h-22 z" fill="#f4f4f4"/><rect x="7.5" y="10.5" width="4" height="4" fill="#f25022"/><rect x="12.5" y="10.5" width="4" height="4" fill="#7fba00"/><rect x="7.5" y="15.5" width="4" height="4" fill="#00a4ef"/><rect x="12.5" y="15.5" width="4" height="4" fill="#ffb900"/></svg>
<svg style="left:573.0px;top:1048.0px;" width="24" height="24" viewBox="0 0 24 24"><path d="M2 4 l16 -2 l4 2 v17 l-4 2 l-16 -2 z" fill="#5d9bd0"/><path d="M4 5 h14 v15 h-14 z" fill="#8fc0e6"/><circle cx="11" cy="12.5" r="6.5" fill="#f28a1e"/><circle cx="11" cy="12.5" r="5" fill="#fbb040"/><path d="M9 9 l6 3.5 l-6 3.5 z" fill="#fff"/></svg>
<svg style="left:622.0px;top:1048.0px;" width="24" height="24" viewBox="0 0 24 24"><circle cx="12" cy="12" r="11.5" fill="#db4437"/><path d="M12 12 L2 6.2 A11.5 11.5 0 0 0 7 22.4 Z" fill="#0f9d58"/><path d="M12 12 L7 22.4 A11.5 11.5 0 0 0 23.5 12 A11.5 11.5 0 0 0 22 6.2 Z" fill="#ffcd40"/><path d="M2 6.2 A11.5 11.5 0 0 1 22 6.2 L12 6.2 Z" fill="#db4437"/><circle cx="12" cy="12" r="5.4" fill="#f1f1f1"/><circle cx="12" cy="12" r="4.2" fill="#4285f4"/></svg>
<svg style="left:671.0px;top:1047.0px;" width="24" height="24" viewBox="0 0 24 24"><rect x="1" y="1" width="22" height="22" rx="1.5" fill="#f5b324"/><rect x="2.2" y="2.2" width="19.6" height="19.6" fill="#fbd36a"/><ellipse cx="8.5" cy="9" rx="5" ry="6" fill="none" stroke="#e08a10" stroke-width="2.6"/><circle cx="19" cy="10.5" r="3.6" fill="#fdf0cf" stroke="#e3a63a" stroke-width=".8"/><path d="M8 16 l12 -1 v6 l-12 1 z" fill="#fff6dd" stroke="#d9a441" stroke-width=".6"/></svg>
<svg style="left:720.0px;top:1047.0px;" width="24" height="24" viewBox="0 0 24 24"><rect x="1" y="1" width="22" height="22" rx="1.5" fill="#2a64c0"/><rect x="2.2" y="2.2" width="19.6" height="19.6" fill="#d9e6f8"/><rect x="2.2" y="2.2" width="19.6" height="12" fill="#e9f0fb"/><path d="M3 5 l2.6 11 h2.4 l2 -7 l2 7 h2.4 l2.6 -11 h-2.6 l-1.4 7 l-2 -7 h-2 l-2 7 l-1.4 -7 z" fill="#1b4fae"/><path d="M13 16 l9 -2 v7 l-9 2 z" fill="#fff" stroke="#8aa8d8" stroke-width=".6"/></svg>
<svg style="left:769.0px;top:1047.0px;" width="24" height="24" viewBox="0 0 24 24"><rect x="1" y="1" width="22" height="22" rx="1.5" fill="#3c9a3e"/><rect x="2.2" y="2.2" width="19.6" height="19.6" fill="#dff0d8"/><path d="M3.5 4 h3.4 l3 4.6 l3 -4.6 h3.4 l-4.7 6.8 l5 7.2 h-3.5 l-3.2 -5 l-3.2 5 h-3.5 l5 -7.2 z" fill="#2c8a2f"/><path d="M12 15 l10 -2 v8 l-10 2 z" fill="#f4fbf1" stroke="#7fbf7f" stroke-width=".6"/></svg>
<svg style="left:819.0px;top:1048.0px;" width="24" height="24" viewBox="0 0 24 24"><rect x="3" y="1" width="18" height="22" rx="1.5" fill="#6b747d"/><rect x="5" y="3" width="14" height="4" fill="#3fc4f3"/><rect x="5" y="9.0" width="4" height="3.6" fill="#c9cfd4"/><rect x="10" y="9.0" width="4" height="3.6" fill="#c9cfd4"/><rect x="15" y="9.0" width="4" height="3.6" fill="#c9cfd4"/><rect x="5" y="13.6" width="4" height="3.6" fill="#c9cfd4"/><rect x="10" y="13.6" width="4" height="3.6" fill="#c9cfd4"/><rect x="15" y="13.6" width="4" height="3.6" fill="#c9cfd4"/><rect x="5" y="18.2" width="4" height="3.6" fill="#c9cfd4"/><rect x="10" y="18.2" width="4" height="3.6" fill="#c9cfd4"/><rect x="15" y="18.2" width="4" height="3.6" fill="#c9cfd4"/><rect x="15" y="13.6" width="4" height="8.2" fill="#1e4f8f"/></svg>
<svg style="left:867.0px;top:1047.0px;" width="24" height="24" viewBox="0 0 24 24"><rect x="1" y="1" width="22" height="22" rx="1.5" fill="#c2185b"/><rect x="2.2" y="2.2" width="19.6" height="19.6" fill="#f7d3e1"/><path d="M3 17 l4.4 -13 h3.4 l4.4 13 h-3 l-.9 -3 h-4.6 l-.9 3 z M7.6 11.6 h3 l-1.5 -5 z" fill="#b0104e"/><circle cx="18.5" cy="11" r="3" fill="#fff" stroke="#d05a8a" stroke-width=".7"/><path d="M7 19 l10 -3 l4 1 l-9 4 z" fill="#fff" stroke="#d05a8a" stroke-width=".6"/></svg>
<svg style="left:918.0px;top:1049.0px;" width="22" height="22" viewBox="0 0 24 24"><path d="M3 3 h16 a2.5 2.5 0 0 1 2.5 2.5 v17 l-4.5 -4 h-14 a2.5 2.5 0 0 1 -2.5 -2.5 v-10.500 a2.500 2.500 0 0 1 2.500 -2.500 z" fill="#7289da"/><path d="M6 8.5 q5 -2.5 10 0 q2 3.500 2 6.500 q-2 1.500 -3.500 1.500 l-.8 -1.300 q-2.700 .8 -5.400 0 l-.8 1.300 q-1.500 0 -3.500 -1.500 q0 -3 2 -6.500 z" fill="#fff"/><ellipse cx="9" cy="12.500" rx="1.300" ry="1.500" fill="#7289da"/><ellipse cx="13" cy="12.500" rx="1.300" ry="1.500" fill="#7289da"/></svg>
<div style="left:664px;top:1078px;width:40px;height:2px;background:#4f83c4;"></div>
<div style="left:762px;top:1078px;width:40px;height:2px;background:#4f83c4;"></div>
<div style="left:856px;top:1078px;width:48px;height:2px;background:#4f83c4;"></div>
<svg style="left:1698px;top:1043px;" width="34" height="34" viewBox="0 0 34 34"><circle cx="17" cy="17" r="16" fill="#fff"/><circle cx="17" cy="17" r="13" fill="#1a9be0"/><text x="17" y="25.500" font-family="Liberation Sans,sans-serif" font-weight="bold" font-size="24" fill="#fff" text-anchor="middle">?</text></svg>
<svg style="left:1736px;top:1055px;" width="14" height="10" viewBox="0 0 14 10"><path d="M1 8 L7 2 L13 8" fill="none" stroke="#fff" stroke-width="1.300"/></svg>
<svg style="left:1758px;top:1052px;" width="18" height="16" viewBox="0 0 18 16"><path d="M5.500 2.500 H16.500 V11.500 H5.500" fill="none" stroke="#fff" stroke-width="1.100"/><path d="M8.500 14.500 H13.500 M11 11.500 V14.500" stroke="#fff" stroke-width="1.100"/><path d="M1.500 2.500 H5.500 V5.500 H1.500 Z M3.500 5.500 V14.500 H8" fill="none" stroke="#fff" stroke-width="1"/></svg>
<svg style="left:1782px;top:1052px;" width="18" height="16" viewBox="0 0 18 16"><path d="M1.500 5.500 H4 L7.500 2 V14 L4 10.500 H1.500 Z" fill="none" stroke="#fff" stroke-width="1"/><path d="M10 5.500 Q11.500 8 10 10.500 M12.300 4 Q14.600 8 12.300 12 M14.600 2.500 Q17.600 8 14.600 13.500" fill="none" stroke="#fff" stroke-width="1"/></svg>
<div class="t c" style="left:1795.0px;top:1043px;width:80px;font-size:12px;color:#fff;transform:scaleX(0.97);">3:14 PM</div>
<div class="t c" style="left:1795.0px;top:1061px;width:80px;font-size:12px;color:#fff;transform:scaleX(0.97);">9/22/2020</div>
<svg style="left:1878px;top:1051px;" width="26" height="26" viewBox="0 0 26 26"><path d="M1.500 1.500 H17.500 V14 H8 L5 17 V14 H1.500 Z" fill="#fff"/><path d="M4 5 H15 M4 7.500 H15 M4 10 H15" stroke="#1f2a36" stroke-width="1"/><circle cx="16" cy="16.500" r="7.300" fill="#2b2f38" stroke="#5a5f68" stroke-width="1"/><text x="16.300" y="20.500" font-family="Liberation Sans,sans-serif" font-size="11" fill="#fff" text-anchor="middle">1</text></svg>
<div style="left:1915px;top:1040px;width:1px;height:40px;background:#5a6470;"></div>
</div></body></html>
